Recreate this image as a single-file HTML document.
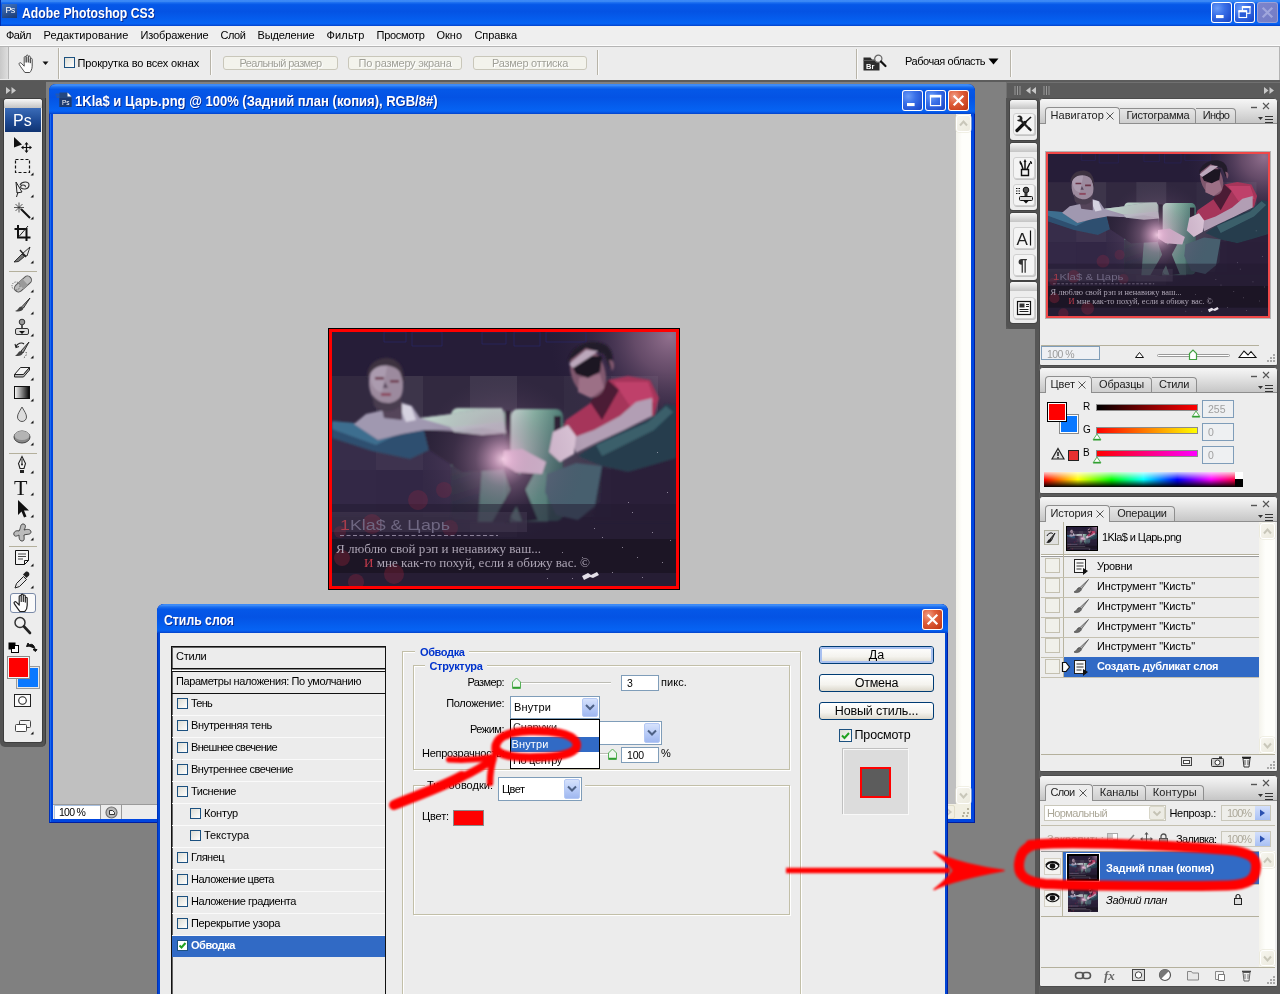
<!DOCTYPE html>
<html lang="ru"><head><meta charset="utf-8"><title>Adobe Photoshop CS3</title>
<style>
html,body{margin:0;padding:0;overflow:hidden}
body{width:1280px;height:994px;overflow:hidden;position:relative;background:#808080;font-family:"Liberation Sans",sans-serif;font-size:11px;}
body div,body svg,body span.t{position:absolute;}
#root{left:0;top:0;width:1280px;height:994px;overflow:hidden;}
span.t,svg text{opacity:0.999;}
span.t{white-space:pre;line-height:1;}
.abs{position:absolute}
</style></head>
<body>
<div id="root">
<!-- part_top -->
<div style="left:0px;top:0px;width:1280px;height:26px;background:linear-gradient(180deg,#3a88f8 0%,#3d8bf5 5%,#1c6ff0 10%,#0558e8 18%,#0453e4 45%,#0560f0 80%,#0663f4 90%,#0553e0 96%,#0340c8 100%);"></div>
<div style="left:0px;top:0px;width:1px;height:26px;background:#0030b0;"></div>
<div style="left:2px;top:4px;width:15px;height:14px;background:linear-gradient(160deg,#3f74c4,#1c3a70);"></div>
<span class="t" style="left:5.50px;top:6.38px;font-size:9px;color:#fff;letter-spacing:-0.752px;">Ps</span>
<span class="t" style="left:22.00px;top:5.73px;font-size:14.5px;color:#fff;font-weight:bold;text-shadow:1px 1px 0 #0a2a90;transform:scaleX(0.8435);transform-origin:0 0;">Adobe Photoshop CS3</span>
<div style="left:1211px;top:2px;width:21px;height:21px;border-radius:3px;background:radial-gradient(circle at 30% 30%,#6a9cf8 0%,#3a70e8 35%,#2050d0 75%,#1840b8 100%);box-shadow:inset 0 0 0 1px #fff;"></div><svg style="left:1211px;top:2px;" width="21" height="21" viewBox="0 0 21 21"><rect x="5.0" y="13.0" width="7.6" height="3.1" fill="#fff"/></svg>
<div style="left:1234px;top:2px;width:21px;height:21px;border-radius:3px;background:radial-gradient(circle at 30% 30%,#6a9cf8 0%,#3a70e8 35%,#2050d0 75%,#1840b8 100%);box-shadow:inset 0 0 0 1px #fff;"></div><svg style="left:1234px;top:2px;" width="21" height="21" viewBox="0 0 21 21"><rect x="8.4" y="4.6" width="7.6" height="6.7" fill="none" stroke="#fff" stroke-width="1.1"/><rect x="7.9" y="4.1" width="8.6" height="2" fill="#fff"/><rect x="5.0" y="8.8" width="7.6" height="6.7" fill="#2a5cd8" stroke="#fff" stroke-width="1.1"/><rect x="4.5" y="8.3" width="8.6" height="2" fill="#fff"/></svg>
<div style="left:1257px;top:2px;width:21px;height:21px;border-radius:3px;background:linear-gradient(135deg,#7c84cc,#747cc4);box-shadow:inset 0 0 0 1px rgba(255,255,255,0.25);"></div><svg style="left:1257px;top:2px;" width="21" height="21" viewBox="0 0 21 21"><path d="M5.7 5.7L15.3 15.3M15.3 5.7L5.7 15.3" stroke="#a0a6dc" stroke-width="2.2" stroke-linecap="butt"/></svg>
<div style="left:0px;top:26px;width:1280px;height:20px;background:#efefef;"></div>
<span class="t" style="left:6.00px;top:29.69px;font-size:11px;color:#000;letter-spacing:-0.511px;">Файл</span>
<span class="t" style="left:43.50px;top:29.69px;font-size:11px;color:#000;letter-spacing:0.086px;">Редактирование</span>
<span class="t" style="left:140.50px;top:29.69px;font-size:11px;color:#000;letter-spacing:-0.117px;">Изображение</span>
<span class="t" style="left:220.50px;top:29.69px;font-size:11px;color:#000;letter-spacing:-0.437px;">Слой</span>
<span class="t" style="left:257.50px;top:29.69px;font-size:11px;color:#000;letter-spacing:-0.143px;">Выделение</span>
<span class="t" style="left:326.50px;top:29.69px;font-size:11px;color:#000;letter-spacing:0.174px;">Фильтр</span>
<span class="t" style="left:376.50px;top:29.69px;font-size:11px;color:#000;letter-spacing:-0.279px;">Просмотр</span>
<span class="t" style="left:436.50px;top:29.69px;font-size:11px;color:#000;letter-spacing:-0.015px;">Окно</span>
<span class="t" style="left:474.50px;top:29.69px;font-size:11px;color:#000;letter-spacing:-0.093px;">Справка</span>
<div style="left:0px;top:45px;width:1280px;height:1px;background:#fcfcfc;"></div>
<div style="left:0px;top:46px;width:1280px;height:34px;background:#ececec;border-top:1px solid #b4b4b4;border-right:1px solid #b4b4b4;box-sizing:border-box;"></div>
<div style="left:0px;top:80px;width:1280px;height:2px;background:#5c5c5c;"></div>
<div style="left:0px;top:47px;width:8px;height:32px;background:linear-gradient(90deg,#c8c8c8,#dedede);"></div>
<div style="left:8px;top:47px;width:1px;height:32px;background:#b5b5b5;"></div>
<div style="left:58px;top:48px;width:1px;height:31px;background:#b8b4a8;"></div>
<div style="left:59px;top:48px;width:1px;height:31px;background:#fafafa;"></div>
<div style="left:210px;top:50px;width:1px;height:25px;background:#b8b4a8;"></div>
<div style="left:211px;top:50px;width:1px;height:25px;background:#fafafa;"></div>
<div style="left:597px;top:50px;width:1px;height:25px;background:#b8b4a8;"></div>
<div style="left:598px;top:50px;width:1px;height:25px;background:#fafafa;"></div>
<div style="left:856px;top:49px;width:1px;height:30px;background:#b8b4a8;"></div>
<div style="left:857px;top:49px;width:1px;height:30px;background:#fafafa;"></div>
<div style="left:1010px;top:50px;width:1px;height:27px;background:#b8b4a8;"></div>
<div style="left:1011px;top:50px;width:1px;height:27px;background:#fafafa;"></div>
<svg style="left:16px;top:53px;" width="22" height="22" viewBox="0 0 22 22"><path d="M8.2 10.5V4.6c0-1.5 2-1.5 2 0v4.8V3.2c0-1.5 2.1-1.5 2.1 0v6.2V4.1c0-1.5 2-1.5 2 0v6V6.3c0-1.4 1.9-1.4 1.9 0v6.9c0 3-1.6 5.6-2.4 6.3H8.9C7.6 17.6 5 14.4 3.3 11.6c-.9-1.5.9-2.6 2-1.4l2.9 3z" fill="#fdfdfd" stroke="#4a4a4a" stroke-width="1" stroke-linejoin="round"/></svg>
<svg style="left:42px;top:61px;" width="8" height="5" viewBox="0 0 8 5"><path d="M0.5 0.5h6L3.5 4z" fill="#111"/></svg>
<div style="left:64px;top:57px;width:11px;height:11px;background:linear-gradient(135deg,#dcdcd4,#fff);border:1px solid #1c5180;box-sizing:border-box;"></div>
<span class="t" style="left:77.50px;top:57.69px;font-size:11px;color:#000;letter-spacing:-0.147px;">Прокрутка во всех окнах</span>
<div style="left:223px;top:56px;width:115px;height:14px;background:#f3f3ec;border:1px solid #c9c7ba;border-radius:3px;box-sizing:border-box;"></div>
<span class="t" style="left:239.50px;top:57.69px;font-size:11px;color:#a0a098;letter-spacing:-0.625px;text-shadow:1px 1px 0 #fff;">Реальный размер</span>
<div style="left:348px;top:56px;width:114px;height:14px;background:#f3f3ec;border:1px solid #c9c7ba;border-radius:3px;box-sizing:border-box;"></div>
<span class="t" style="left:358.50px;top:57.69px;font-size:11px;color:#a0a098;letter-spacing:-0.254px;text-shadow:1px 1px 0 #fff;">По размеру экрана</span>
<div style="left:473px;top:56px;width:114px;height:14px;background:#f3f3ec;border:1px solid #c9c7ba;border-radius:3px;box-sizing:border-box;"></div>
<span class="t" style="left:492.00px;top:57.69px;font-size:11px;color:#a0a098;letter-spacing:-0.259px;text-shadow:1px 1px 0 #fff;">Размер оттиска</span>
<svg style="left:862px;top:52px;" width="28" height="24" viewBox="0 0 28 24"><path d="M1.500 5.500h7l1.500 2h7.500v11h-16z" fill="#2c2c2c"/><path d="M1.500 8.500h16" stroke="#666" stroke-width="0.800"/><circle cx="16.300" cy="6.800" r="3.600" fill="#ececec" stroke="#666" stroke-width="1.200"/><path d="M19 9.500l4.500 4.500" stroke="#111" stroke-width="2.200" stroke-linecap="round"/><text x="4" y="17" font-family="Liberation Sans,sans-serif" font-size="7.500" font-weight="bold" fill="#fff">Br</text></svg>
<span class="t" style="left:905.00px;top:55.69px;font-size:11px;color:#000;letter-spacing:-0.457px;">Рабочая область</span>
<svg style="left:988px;top:58px;" width="12" height="8" viewBox="0 0 12 8"><path d="M0.5 0.5h10L5.5 6.5z" fill="#000"/></svg>
<!-- part_tools -->
<div style="left:0px;top:81px;width:46px;height:666px;background:#535353;border-right:1px solid #3c3c3c;border-top:1px solid #6a6a6a;box-sizing:border-box;border-radius:0 0 5px 5px;"></div>
<div style="left:0px;top:81px;width:46px;height:17px;background:#585858;"></div>
<svg style="left:6px;top:87px;" width="11" height="7" viewBox="0 0 11 7"><path d="M0 0l4.500 3.500L0 7zM5.500 0l4.500 3.500L5.500 7z" fill="#c8c8c8"/></svg>
<div style="left:4px;top:99px;width:38px;height:643px;background:#ededed;border-radius:3px 3px 2px 2px;box-shadow:0 0 0 1px #3e3e3e;"></div>
<div style="left:4px;top:99px;width:38px;height:9px;background:linear-gradient(180deg,#f8f8f8,#c4c4c4);border-radius:3px 3px 0 0;"></div>
<div style="left:5px;top:108px;width:36px;height:24px;background:linear-gradient(180deg,#3b6cb8 0%,#1e4a94 55%,#103472 100%);"></div>
<span class="t" style="left:13.00px;top:113.46px;font-size:16px;color:#fff;letter-spacing:0.164px;">Ps</span>
<svg style="left:10.5px;top:134px;" width="22" height="22" viewBox="0 0 22 22"><path d="M3 3v10.5l8-3z" fill="#111"/><path d="M15.5 9.5v8M11.5 13.5h8" stroke="#111" stroke-width="1.2"/><path d="M15.5 8l-2 2.5h4zM15.5 19l-2-2.5h4zM10 13.5l2.5-2v4zM21 13.5l-2.5-2v4z" fill="#111"/></svg>
<svg style="left:11px;top:156px;" width="22" height="22" viewBox="0 0 22 22"><rect x="4.5" y="3.500" width="14" height="13" fill="none" stroke="#111" stroke-width="1.2" stroke-dasharray="3 2"/></svg>
<svg style="left:29.5px;top:172px;" width="4" height="4" viewBox="0 0 4 4"><path d="M3.500 0.500V3.500H0.500z" fill="#111"/></svg>
<svg style="left:10.5px;top:178px;" width="22" height="22" viewBox="0 0 22 22"><path d="M5 4l6 10-5 1z" fill="#eee" stroke="#222" stroke-width="1"/><path d="M9 7c2-4 9-4 9 0s-5 5-8 3c-1-1 0-3 2-3s3 1 2 2" fill="none" stroke="#333" stroke-width="1.1"/><path d="M7 14l-1.500 5" stroke="#222" stroke-width="1"/></svg>
<svg style="left:29.5px;top:194px;" width="4" height="4" viewBox="0 0 4 4"><path d="M3.500 0.500V3.500H0.500z" fill="#111"/></svg>
<svg style="left:10.5px;top:200px;" width="22" height="22" viewBox="0 0 22 22"><path d="M10 9l9 9" stroke="#111" stroke-width="2"/><path d="M8 2.500v10M3 7.500h10M4.500 4l7 7M11.500 4l-7 7" stroke="#333" stroke-width="0.8"/></svg>
<svg style="left:29.5px;top:216px;" width="4" height="4" viewBox="0 0 4 4"><path d="M3.500 0.500V3.500H0.500z" fill="#111"/></svg>
<svg style="left:11px;top:222px;" width="22" height="22" viewBox="0 0 22 22"><path d="M7 3v12.500h12.500M3.500 7h12v12" fill="none" stroke="#111" stroke-width="2"/><path d="M8 14.500L17 4" stroke="#222" stroke-width="1"/></svg>
<svg style="left:11px;top:244px;" width="22" height="22" viewBox="0 0 22 22"><path d="M3 18l8-8 2.5 2.5-6 5z" fill="#777" stroke="#222" stroke-width="0.9"/><path d="M11 10l8-7-3 9z" fill="#e4e4e4" stroke="#222" stroke-width="0.9"/><path d="M9 6l6 7" stroke="#222" stroke-width="1.4"/></svg>
<svg style="left:29.5px;top:260px;" width="4" height="4" viewBox="0 0 4 4"><path d="M3.500 0.500V3.500H0.500z" fill="#111"/></svg>
<svg style="left:10.5px;top:273px;" width="22" height="22" viewBox="0 0 22 22"><g transform="rotate(-42 12 11)"><rect x="2" y="7" width="20" height="8" rx="4" fill="#bdbdbd" stroke="#555" stroke-width="1"/><rect x="9" y="7" width="6" height="8" fill="#9a9a9a"/></g><circle cx="5" cy="13" r="4" fill="none" stroke="#555" stroke-width="0.9" stroke-dasharray="1.2 1.2"/></svg>
<svg style="left:29.5px;top:289px;" width="4" height="4" viewBox="0 0 4 4"><path d="M3.500 0.500V3.500H0.500z" fill="#111"/></svg>
<svg style="left:11px;top:295px;" width="22" height="22" viewBox="0 0 22 22"><path d="M19 3l-8 8.500 1.500 1.500z" fill="#999" stroke="#222" stroke-width="0.900"/><path d="M10.500 11.500c-3 0-3 3.500-6.500 4.500 3.500 1.500 7.500 0 8.500-2.500z" fill="#444"/></svg>
<svg style="left:29.5px;top:311px;" width="4" height="4" viewBox="0 0 4 4"><path d="M3.500 0.500V3.500H0.500z" fill="#111"/></svg>
<svg style="left:11px;top:317px;" width="22" height="22" viewBox="0 0 22 22"><circle cx="11" cy="5" r="2.8" fill="#999" stroke="#333"/><path d="M10 7.5h2v4h-2z" fill="#555"/><rect x="4.5" y="11.5" width="13" height="6" rx="1.5" fill="#ddd" stroke="#333"/><path d="M8 14h6l-3 3z" fill="#111"/></svg>
<svg style="left:29.5px;top:333px;" width="4" height="4" viewBox="0 0 4 4"><path d="M3.500 0.500V3.500H0.500z" fill="#111"/></svg>
<svg style="left:11px;top:339px;" width="22" height="22" viewBox="0 0 22 22"><path d="M18 3l-8 9 2 2z" fill="#999" stroke="#222" stroke-width="0.9"/><path d="M10 12c-3 0-3 3.5-6 4.500 3.5 1.5 7 0 8-2.5z" fill="#444"/><path d="M5 8c1-4 6-5 8-3M4 5l1 3.5 3-1" fill="none" stroke="#222" stroke-width="1.1"/><path d="M15 13c1 2 0 5-3 6" fill="none" stroke="#444" stroke-width="0.9" stroke-dasharray="1.3 1.3"/></svg>
<svg style="left:29.5px;top:355px;" width="4" height="4" viewBox="0 0 4 4"><path d="M3.500 0.500V3.500H0.500z" fill="#111"/></svg>
<svg style="left:11px;top:361px;" width="22" height="22" viewBox="0 0 22 22"><path d="M3.500 13.500l6-7h9l-6 7z" fill="#f4f4f4" stroke="#222" stroke-width="1"/><path d="M3.500 13.500v2.500h9l6-7V6.500l-6 7z" fill="#bbb" stroke="#222" stroke-width="1"/></svg>
<svg style="left:29.5px;top:377px;" width="4" height="4" viewBox="0 0 4 4"><path d="M3.500 0.500V3.500H0.500z" fill="#111"/></svg>
<svg style="left:11px;top:382px;" width="22" height="22" viewBox="0 0 22 22"><defs><linearGradient id="tg" x1="0" x2="1"><stop offset="0" stop-color="#fff"/><stop offset="1" stop-color="#000"/></linearGradient></defs><rect x="3.500" y="4.500" width="15" height="12" fill="url(#tg)" stroke="#111"/></svg>
<svg style="left:29.5px;top:398px;" width="4" height="4" viewBox="0 0 4 4"><path d="M3.500 0.500V3.500H0.500z" fill="#111"/></svg>
<svg style="left:11px;top:404px;" width="22" height="22" viewBox="0 0 22 22"><path d="M11 3c2.500 4.500 4.500 7 4.500 10a4.500 4.500 0 01-9 0c0-3 2-5.500 4.500-10z" fill="#ddd" stroke="#555" stroke-width="1"/></svg>
<svg style="left:29.5px;top:420px;" width="4" height="4" viewBox="0 0 4 4"><path d="M3.500 0.500V3.500H0.500z" fill="#111"/></svg>
<svg style="left:11px;top:426px;" width="22" height="22" viewBox="0 0 22 22"><ellipse cx="11" cy="11" rx="8" ry="6" fill="#888" stroke="#444"/><ellipse cx="11" cy="9.500" rx="7.500" ry="4.500" fill="#b4b4b4"/></svg>
<svg style="left:29.5px;top:442px;" width="4" height="4" viewBox="0 0 4 4"><path d="M3.500 0.500V3.500H0.500z" fill="#111"/></svg>
<svg style="left:11px;top:454px;" width="22" height="22" viewBox="0 0 22 22"><path d="M11 2.500l3.500 7-1.500 5h-4l-1.500-5z" fill="#f4f4f4" stroke="#222" stroke-width="1.1"/><path d="M11 5v5" stroke="#222"/><circle cx="11" cy="10.500" r="1" fill="#222"/><path d="M9 16h4v3H9z" fill="#222"/></svg>
<svg style="left:29.5px;top:470px;" width="4" height="4" viewBox="0 0 4 4"><path d="M3.500 0.500V3.500H0.500z" fill="#111"/></svg>
<svg style="left:11px;top:476px;" width="22" height="22" viewBox="0 0 22 22"><text x="3" y="19" font-family="Liberation Serif,serif" font-size="22" fill="#111">T</text></svg>
<svg style="left:29.5px;top:492px;" width="4" height="4" viewBox="0 0 4 4"><path d="M3.500 0.500V3.500H0.500z" fill="#111"/></svg>
<svg style="left:11px;top:498px;" width="22" height="22" viewBox="0 0 22 22"><path d="M7 2v15l3.500-3.500 2.500 6 2.500-1-2.500-6H18z" fill="#111"/></svg>
<svg style="left:29.5px;top:514px;" width="4" height="4" viewBox="0 0 4 4"><path d="M3.500 0.500V3.500H0.500z" fill="#111"/></svg>
<svg style="left:11px;top:521px;" width="22" height="22" viewBox="0 0 22 22"><path d="M3 14c-1-3 2-5 5-4 2-3 1-7 4-7s3 3 1 6c3-1 7-1 7 2s-5 2-7 3c0 3 1 6-2 6s-3-4-3-6c-2 1-4 2-5 0z" fill="#bbb" stroke="#444" stroke-width="1"/></svg>
<svg style="left:29.5px;top:537px;" width="4" height="4" viewBox="0 0 4 4"><path d="M3.500 0.500V3.500H0.500z" fill="#111"/></svg>
<svg style="left:11px;top:547px;" width="22" height="22" viewBox="0 0 22 22"><path d="M4.500 3.500h13v10l-4 4h-9z" fill="#f4f4f4" stroke="#111"/><path d="M7 7h8M7 9.500h8M7 12h5" stroke="#333" stroke-width="0.900"/><path d="M17.500 13.500h-4v4" fill="none" stroke="#111"/></svg>
<svg style="left:29.5px;top:563px;" width="4" height="4" viewBox="0 0 4 4"><path d="M3.500 0.500V3.500H0.500z" fill="#111"/></svg>
<svg style="left:11px;top:569px;" width="22" height="22" viewBox="0 0 22 22"><path d="M4 19l1.500-4.500 7-7 3 3-7 7z" fill="#e4e4e4" stroke="#222" stroke-width="1"/><path d="M12 5.500l2.500-2.500c2-1.500 5 1.500 3.500 3.500l-2.500 2.500z" fill="#222"/></svg>
<svg style="left:29.5px;top:585px;" width="4" height="4" viewBox="0 0 4 4"><path d="M3.500 0.500V3.500H0.500z" fill="#111"/></svg>
<div style="left:10px;top:593px;width:26px;height:20px;background:#fafafa;border:1px solid #7a8aa8;border-radius:3px;box-sizing:border-box;"></div>
<svg style="left:11px;top:592px;" width="22" height="22" viewBox="0 0 22 22"><path d="M8.200 10.500V4.600c0-1.500 2-1.500 2 0v4.800V3.200c0-1.500 2.100-1.500 2.100 0v6.200V4.100c0-1.500 2-1.500 2 0v6V6.300c0-1.400 1.900-1.400 1.900 0v6.900c0 3-1.600 5.600-2.400 6.300H8.900C7.600 17.600 5 14.400 3.300 11.600c-.9-1.500.9-2.600 2-1.400l2.900 3z" fill="#fff" stroke="#222" stroke-width="1.200" stroke-linejoin="round"/></svg>
<svg style="left:11px;top:614px;" width="22" height="22" viewBox="0 0 22 22"><circle cx="9" cy="8.500" r="5" fill="#f0f0f0" stroke="#333" stroke-width="1.5"/><path d="M13 12.500l6 6.500" stroke="#222" stroke-width="2.6" stroke-linecap="round"/></svg>
<div style="left:9px;top:271px;width:28px;height:1px;background:#b4b09c;"></div>
<div style="left:9px;top:453px;width:28px;height:1px;background:#b4b09c;"></div>
<div style="left:9px;top:546px;width:28px;height:1px;background:#b4b09c;"></div>
<svg style="left:8px;top:642px;" width="12" height="12" viewBox="0 0 12 12"><rect x="0.500" y="0.500" width="7" height="7" fill="#000"/><rect x="3.500" y="3.500" width="7" height="7" fill="#fff" stroke="#000"/><rect x="1" y="1" width="6" height="6" fill="#000"/></svg>
<svg style="left:26px;top:642px;" width="12" height="12" viewBox="0 0 12 12"><path d="M2 4c3-3 6-2 7 3M9.500 9.500l-2.500-2h4zM2 1l-1.500 3.500 3.500-.5z" fill="#111" stroke="#111" stroke-width="1"/></svg>
<div style="left:18px;top:668px;width:20px;height:19px;background:#0a78ff;box-shadow:0 0 0 1px #e8e8e8,0 0 0 2px #9a9a9a;"></div>
<div style="left:9px;top:658px;width:19px;height:19px;background:#ff0000;box-shadow:0 0 0 1px #f4f4f4,0 0 0 2px #8a8a8a;"></div>
<svg style="left:13px;top:693px;" width="20" height="16" viewBox="0 0 20 16"><rect x="1.500" y="1.500" width="16" height="12" fill="#fafafa" stroke="#222"/><circle cx="9.500" cy="7.500" r="3.800" fill="#fff" stroke="#222" stroke-width="1.100"/></svg>
<svg style="left:13px;top:718px;" width="20" height="16" viewBox="0 0 20 16"><rect x="6.500" y="2.500" width="11" height="7" rx="1" fill="#f4f4f4" stroke="#444"/><rect x="2.500" y="6.500" width="11" height="7" rx="1" fill="#fdfdfd" stroke="#444"/></svg>
<svg style="left:29.5px;top:731px;" width="4" height="4" viewBox="0 0 4 4"><path d="M3.500 0.500V3.500H0.500z" fill="#111"/></svg>
<!-- part_doc -->
<div style="left:49px;top:84px;width:926px;height:739px;background:#0046e0;border-radius:7px 7px 0 0;box-shadow:inset 1px 0 0 #0030b8,inset -1px -1px 0 #001ea0,inset 2px 0 0 #1a6af0;"></div>
<div style="left:49px;top:84px;width:926px;height:30px;background:linear-gradient(180deg,#3a88f8 0%,#3d8bf5 5%,#1c6ff0 10%,#0558e8 18%,#0453e4 45%,#0560f0 80%,#0663f4 90%,#0553e0 96%,#0340c8 100%);border-radius:7px 7px 0 0;"></div>
<div style="left:53px;top:114px;width:903px;height:690px;background:#c0c0c0;"></div>
<svg style="left:55px;top:90px;" width="18" height="18" viewBox="0 0 18 18"><path d="M0.5 3.5h9v2h-9zM1.5 6h8v2h-8z" fill="#2458b0"/><path d="M4.5 2.5h8l4 4v10.500h-12z" fill="#244880"/><path d="M4.5 8h12v9h-12z" fill="#1c3a70"/><path d="M12.5 2.500v4h4z" fill="#fff"/><text x="7" y="14.500" font-family="Liberation Sans,sans-serif" font-size="6.500" fill="#fff">Ps</text></svg>
<span class="t" style="left:75.00px;top:93.73px;font-size:14.5px;color:#fff;font-weight:bold;text-shadow:1px 1px 0 #0a2a90;transform:scaleX(0.8970);transform-origin:0 0;">1Kla$ и Царь.png @ 100% (Задний план (копия), RGB/8#)</span>
<div style="left:902px;top:90px;width:21px;height:21px;border-radius:3px;background:radial-gradient(circle at 30% 30%,#6a9cf8 0%,#3a70e8 35%,#2050d0 75%,#1840b8 100%);box-shadow:inset 0 0 0 1px #fff;"></div><svg style="left:902px;top:90px;" width="21" height="21" viewBox="0 0 21 21"><rect x="5.0" y="13.0" width="7.6" height="3.1" fill="#fff"/></svg>
<div style="left:925px;top:90px;width:21px;height:21px;border-radius:3px;background:radial-gradient(circle at 30% 30%,#6a9cf8 0%,#3a70e8 35%,#2050d0 75%,#1840b8 100%);box-shadow:inset 0 0 0 1px #fff;"></div><svg style="left:925px;top:90px;" width="21" height="21" viewBox="0 0 21 21"><rect x="5.5" y="5.5" width="10.1" height="10.1" fill="none" stroke="#fff" stroke-width="1.2"/><rect x="4.9" y="4.9" width="11.3" height="2.6" fill="#fff"/></svg>
<div style="left:948px;top:90px;width:21px;height:21px;border-radius:3px;background:radial-gradient(circle at 30% 30%,#f0a088 0%,#e0603c 35%,#c8401c 75%,#b03010 100%);box-shadow:inset 0 0 0 1px #fff;"></div><svg style="left:948px;top:90px;" width="21" height="21" viewBox="0 0 21 21"><path d="M5.7 5.7L15.3 15.3M15.3 5.7L5.7 15.3" stroke="#fff" stroke-width="2.2" stroke-linecap="butt"/></svg>
<div style="left:956px;top:114px;width:15px;height:690px;background:linear-gradient(90deg,#f4f3ec,#fefefb 40%,#fefefb);"></div>
<div style="left:956px;top:115px;width:15px;height:17px;background:linear-gradient(135deg,#f6f5ee,#eceade);border:1px solid #fff;border-radius:3px;box-sizing:border-box;box-shadow:0 0 0 0.5px #e4e1d0;"></div><svg style="left:956px;top:115px;" width="15" height="17" viewBox="0 0 15 17"><path d="M4 10.500l3.500-4 3.500 4" fill="none" stroke="#c9c7ba" stroke-width="2"/></svg>
<div style="left:956px;top:787px;width:15px;height:17px;background:linear-gradient(135deg,#f6f5ee,#eceade);border:1px solid #fff;border-radius:3px;box-sizing:border-box;box-shadow:0 0 0 0.5px #e4e1d0;"></div><svg style="left:956px;top:787px;" width="15" height="17" viewBox="0 0 15 17"><path d="M4 6.500l3.500 4 3.500-4" fill="none" stroke="#c9c7ba" stroke-width="2"/></svg>
<div style="left:53px;top:804px;width:903px;height:15px;background:#ececec;border-top:1px solid #9a9a9a;box-sizing:border-box;"></div>
<div style="left:54px;top:805px;width:46px;height:14px;background:#fff;border-right:1px solid #9a9a9a;box-shadow:inset 1px 1px 0 #a8c0e0;"></div>
<span class="t" style="left:59.00px;top:807.11px;font-size:10.5px;color:#000;letter-spacing:-0.754px;">100 %</span>
<div style="left:121px;top:805px;width:1px;height:14px;background:#9a9a9a;"></div>
<svg style="left:105px;top:806px;" width="13" height="13" viewBox="0 0 13 13"><circle cx="6.500" cy="6.500" r="5.500" fill="#b8b8b8" stroke="#707070" stroke-width="1.200"/><path d="M4.500 4.500h3l2 2v2h-5z" fill="#f4f4f4" stroke="#222" stroke-width="0.900"/></svg>
<div style="left:940px;top:804px;width:31px;height:15px;background:#f1efe2;"></div>
<div style="left:941px;top:805px;width:14px;height:14px;background:#f1efe2;border:1px solid #e0ddc8;border-radius:2px;box-sizing:border-box;"></div>
<svg style="left:941px;top:805px;" width="14" height="14" viewBox="0 0 14 14"><path d="M5.500 3.500l4 3.500-4 3.500" fill="none" stroke="#c9c7ba" stroke-width="2"/></svg>
<svg style="left:958px;top:806px;" width="12" height="12" viewBox="0 0 12 12"><path d="M10 2v2M10 6v2M6 6v2M10 10v0M8 10h2M4 10h2" stroke="#b8b4a0" stroke-width="2"/></svg>
<div style="left:328px;top:328px;width:352px;height:262px;background:#000;"></div>
<div style="left:329px;top:329px;width:350px;height:260px;background:#ff0000;"></div>
<svg style="left:332px;top:332px;" width="344" height="254" viewBox="0 0 344 254" preserveAspectRatio="none"><defs>
<radialGradient id="pag1" gradientUnits="userSpaceOnUse" cx="171" cy="127" r="82"><stop offset="0" stop-color="#f6cfe6" stop-opacity="0.95"/><stop offset="0.12" stop-color="#dcaacb" stop-opacity="0.78"/><stop offset="0.34" stop-color="#b084a6" stop-opacity="0.42"/><stop offset="0.62" stop-color="#8a6488" stop-opacity="0.17"/><stop offset="1" stop-color="#604868" stop-opacity="0"/></radialGradient>
<radialGradient id="pag2" gradientUnits="userSpaceOnUse" cx="338" cy="4" r="120"><stop offset="0" stop-color="#92708e" stop-opacity="1"/><stop offset="0.3" stop-color="#745674" stop-opacity="0.8"/><stop offset="0.65" stop-color="#4a3858" stop-opacity="0.35"/><stop offset="1" stop-color="#3a2c48" stop-opacity="0"/></radialGradient>
<linearGradient id="pas1" x1="0" y1="0" x2="0.15" y2="1"><stop offset="0" stop-color="#c4dcd0"/><stop offset="0.3" stop-color="#8ab8a4"/><stop offset="0.6" stop-color="#4c7c74"/><stop offset="1" stop-color="#2e4a50"/></linearGradient>
<linearGradient id="pas2" x1="0" y1="0" x2="1" y2="0.6"><stop offset="0" stop-color="#cfe6dc"/><stop offset="0.35" stop-color="#86b8a4"/><stop offset="0.75" stop-color="#4a7a72"/><stop offset="1" stop-color="#385c5c"/></linearGradient>
<filter id="pab" x="-5%" y="-5%" width="110%" height="110%"><feGaussianBlur stdDeviation="1.1"/></filter>
</defs><rect width="344" height="254" fill="#2a2139"/><rect width="344" height="44" fill="#261d38"/><rect x="0" y="44" width="44" height="47" fill="#fff" fill-opacity="0.04"/><rect x="44" y="44" width="47" height="47" fill="#fff" fill-opacity="0.09"/><rect x="91" y="44" width="47" height="47" fill="#fff" fill-opacity="0.04"/><rect x="138" y="44" width="47" height="47" fill="#fff" fill-opacity="0.1"/><rect x="185" y="44" width="47" height="47" fill="#fff" fill-opacity="0.03"/><rect x="232" y="44" width="47" height="47" fill="#fff" fill-opacity="0.05"/><rect x="279" y="44" width="47" height="47" fill="#fff" fill-opacity="0.12"/><rect x="0" y="91" width="44" height="47" fill="#fff" fill-opacity="0.08"/><rect x="44" y="91" width="47" height="47" fill="#fff" fill-opacity="0.14"/><rect x="91" y="91" width="47" height="47" fill="#fff" fill-opacity="0.07"/><rect x="138" y="91" width="47" height="47" fill="#fff" fill-opacity="0.12"/><rect x="185" y="91" width="47" height="47" fill="#fff" fill-opacity="0.1"/><rect x="232" y="91" width="47" height="47" fill="#fff" fill-opacity="0.12"/><rect x="279" y="91" width="65" height="47" fill="#fff" fill-opacity="0.02"/><rect x="0" y="138" width="44" height="47" fill="#fff" fill-opacity="0.03"/><rect x="44" y="138" width="47" height="47" fill="#fff" fill-opacity="0.02"/><rect x="91" y="138" width="47" height="47" fill="#fff" fill-opacity="0.04"/><rect x="138" y="138" width="47" height="47" fill="#fff" fill-opacity="0.12"/><rect x="185" y="138" width="47" height="47" fill="#fff" fill-opacity="0.1"/><rect x="232" y="138" width="47" height="47" fill="#fff" fill-opacity="0.03"/><rect x="138" y="185" width="47" height="20" fill="#fff" fill-opacity="0.03"/><rect width="344" height="254" fill="url(#pag2)"/><path d="M52 0h22v10H52zM80 0h30v14H80zM150 0h24v12h-24zM182 0h26v14h-26zM214 0h40v10h-40z" fill="none" stroke="#2a2870" stroke-width="1" opacity="0.6"/><g filter="url(#pab)"><rect x="119" y="76" width="54" height="112" rx="7" fill="url(#pas1)"/><rect x="179" y="77" width="52" height="112" rx="7" fill="url(#pas2)"/><path d="M173 79h6v112h-6z" fill="#1c1626"/><path d="M119 134L172 134L172 190L119 190Z" fill="#2a2038" opacity="0.82"/><path d="M150 136L172 132L182 150L168 190L146 190Z" fill="#5c9484" opacity="0.7"/><path d="M182 136L214 140L216 190L178 190Z" fill="#5e9686" opacity="0.55"/><path d="M170 134L184 134L206 188L190 190Z" fill="#241c30"/><path d="M202 142L190 138L160 190L176 190Z" fill="#241c30"/><path d="M0 89L22 91L46 108L70 102L92 98L97 118L78 127L40 119L0 106Z" fill="#2f4f70"/><path d="M0 89L22 91L46 108L62 104L44 113L0 97Z" fill="#44789a" opacity="0.75"/><path d="M0 106L40 119L78 127L97 118L119 130L119 182L0 182Z" fill="#352c4a" opacity="0.55"/><path d="M22 92L34 82L52 78L58 72L68 70L80 74L88 86L120 82L150 77L170 76L172 90L150 96L122 99L92 98L70 102L46 108Z" fill="#a098b0"/><path d="M88 86L120 82L150 77L170 76L172 90L150 95L118 95Z" fill="#bcd0c8"/><path d="M66 71L79 74L84 88L74 90Z" fill="#d6d2e0"/><path d="M48 68L70 70L70 88L52 86Z" fill="#54445a"/><ellipse cx="54" cy="52" rx="17" ry="24" fill="#9c8a9e" transform="rotate(-6 54 52)"/><path d="M38 44C40 34 48 30 56 30L50 60C44 60 39 54 38 44Z" fill="#b0a0b4" opacity="0.75"/><path d="M40 62C46 73 64 75 70 62L68 74C62 81 48 81 42 74Z" fill="#4a3c50"/><path d="M35 46C35 30 47 25 57 26C69 28 73 38 72 52L68 40C62 32 47 31 40 39Z" fill="#3c3040"/><path d="M43 45h9v2.500H43zM58 48h9v2.500h-9z" fill="#6c3448"/><path d="M49 61h10v3H49z" fill="#8c4860"/><path d="M53 50l3 6h-5z" fill="#5a4a5e"/><path d="M92 98L122 99L150 96L172 100L176 122L170 138L130 140L97 118Z" fill="#2b2139"/><path d="M118 95L172 90L174 101L150 103L122 100Z" fill="#c4ccd0" opacity="0.9"/><path d="M172 119L190 117L214 130L210 142L184 140L172 132Z" fill="#dcc4d8"/><path d="M246 124L266 111L292 98L316 88L334 72L344 74L344 126L322 133L296 140L270 134Z" fill="#263e4e"/><path d="M264 113L316 90L334 74L341 80L322 98L270 124Z" fill="#4a747e" opacity="0.6"/><path d="M215 142L244 131L270 134L268 170L246 188L224 183L213 160Z" fill="#465f6e"/><path d="M270 134L296 140L344 126L344 190L260 190Z" fill="#2a2139" opacity="0.85"/><path d="M228 104L234 88L260 70L276 48L296 44L318 48L327 66L322 84L300 80L276 94L250 106Z" fill="#a6345a"/><path d="M282 50L316 50L323 70L298 74Z" fill="#c2426c" opacity="0.9"/><path d="M258 70L276 48L287 58L270 88Z" fill="#4c1c34"/><ellipse cx="256" cy="40" rx="17" ry="26" fill="#80586e" transform="rotate(-18 256 40)"/><path d="M247 46L268 42L272 56L259 66L246 60Z" fill="#9c7086"/><path d="M236 30C238 13 260 5 274 13C282 19 282 29 278 36L272 22L254 16Z" fill="#241c2c"/><path d="M240 34L258 24L270 24L268 40L256 46L244 42Z" fill="#1a1322"/><path d="M237 32L254 18L266 19L258 25L241 36Z" fill="#bca8bc"/><path d="M277 28c5-1 7 6 3 11z" fill="#80586e"/><path d="M240 106L262 98L288 84L304 70L320 66L320 84L292 98L266 110L244 121Z" fill="#b29eb4"/><path d="M222 84h7v20h-7z" fill="#261d2e"/><path d="M221 100L236 93L244 104L242 122L228 130L217 120Z" fill="#dcc6d8"/></g><rect width="344" height="254" fill="url(#pag1)"/><rect y="172" width="344" height="82" fill="#221a30" opacity="0.5"/><rect x="0" y="180" width="195" height="20" fill="#5a5068" opacity="0.3"/><rect x="0" y="207" width="344" height="34" fill="#15101c" opacity="0.6"/><circle cx="86" cy="168" r="10" fill="#c02840" opacity="0.2"/><circle cx="112" cy="158" r="8" fill="#c02840" opacity="0.16"/><circle cx="40" cy="192" r="10" fill="#c02840" opacity="0.2"/><circle cx="10" cy="226" r="8" fill="#c02840" opacity="0.28"/><circle cx="62" cy="242" r="10" fill="#c02840" opacity="0.25"/><circle cx="24" cy="250" r="8" fill="#c02840" opacity="0.25"/><circle cx="118" cy="196" r="8" fill="#c02840" opacity="0.15"/><circle cx="8" cy="200" r="6" fill="#c02840" opacity="0.2"/><path d="M8 203.500h158" stroke="#8a8098" stroke-width="1" stroke-dasharray="4 2.500"/><path d="M250 244l6-3 3 2 6-3 2 3-6 3-3-1-6 3z" fill="#e4dfe8"/><g fill="#cfc8d8" opacity="0.6"><rect x="300" y="180" width="1" height="1"/><rect x="320" y="200" width="1" height="1"/><rect x="290" y="215" width="1" height="1"/><rect x="330" y="230" width="1" height="1"/><rect x="310" y="245" width="1" height="1"/><rect x="270" y="205" width="1" height="1"/><rect x="250" y="225" width="1" height="1"/><rect x="335" y="160" width="1" height="1"/><rect x="280" y="240" width="1" height="1"/><rect x="325" y="120" width="1" height="1"/><rect x="240" y="246" width="1" height="1"/><rect x="305" y="225" width="1" height="1"/><rect x="262" y="196" width="1" height="1"/><rect x="338" y="208" width="1" height="1"/><rect x="296" y="170" width="1" height="1"/><rect x="230" y="220" width="1" height="1"/><rect x="215" y="246" width="1" height="1"/></g><text x="8" y="197.5" font-family="Liberation Sans,sans-serif" font-size="14" fill="#6f6782" textLength="110" lengthAdjust="spacingAndGlyphs"><tspan fill="#a83c4c">1</tspan>Kla$ &amp; Царь</text><text x="4" y="220.5" font-family="Liberation Serif,serif" font-size="13.500" fill="#aca4b4" textLength="205" lengthAdjust="spacingAndGlyphs">Я люблю свой рэп и ненавижу ваш...</text><text x="32" y="234.5" font-family="Liberation Serif,serif" font-size="13.500" fill="#aca4b4" textLength="226" lengthAdjust="spacingAndGlyphs"><tspan fill="#c43c4c">И</tspan> мне как-то похуй, если я обижу вас. ©</text></svg>
<!-- part_dock -->
<div style="left:1006px;top:82px;width:274px;height:912px;background:#5a5a5a;"></div>
<div style="left:1006px;top:82px;width:274px;height:16px;background:#5b5b5b;border-top:1px solid #707070;border-left:1px solid #707070;box-sizing:border-box;"></div>
<div style="left:1006px;top:98px;width:1px;height:226px;background:#6a6a6a;"></div>
<div style="left:1037px;top:98px;width:3px;height:896px;background:#5e5e5e;"></div>
<svg style="left:1014px;top:86px;" width="8" height="9" viewBox="0 0 8 9"><path d="M1 0v9M3.500 0v9M6 0v9" stroke="#9a9a9a" stroke-width="1"/></svg>
<svg style="left:1026px;top:87px;" width="11" height="7" viewBox="0 0 11 7"><path d="M4.500 0L0 3.500 4.500 7zM10 0L5.500 3.500 10 7z" fill="#c8c8c8"/></svg>
<svg style="left:1043px;top:86px;" width="8" height="9" viewBox="0 0 8 9"><path d="M1 0v9M3.500 0v9M6 0v9" stroke="#9a9a9a" stroke-width="1"/></svg>
<svg style="left:1264px;top:87px;" width="11" height="7" viewBox="0 0 11 7"><path d="M0 0l4.500 3.500L0 7zM5.500 0l4.500 3.500L5.500 7z" fill="#c8c8c8"/></svg>
<div style="left:1006px;top:98px;width:33px;height:231px;background:#535353;border-radius:0 0 0 5px;"></div>
<div style="left:1006px;top:329px;width:29px;height:665px;background:#808080;"></div>
<div style="left:1005px;top:325px;width:1px;height:669px;background:#808080;"></div>
<div style="left:1035px;top:329px;width:4px;height:665px;background:#565656;"></div>
<div style="left:1010px;top:100px;width:27px;height:40px;background:#ededed;border-radius:3px;box-shadow:0 0 0 1px #444;"></div>
<div style="left:1010px;top:100px;width:27px;height:9px;background:linear-gradient(180deg,#f8f8f8,#c4c4c4);border-radius:3px 3px 0 0;"></div>
<div style="left:1010px;top:143px;width:27px;height:67px;background:#ededed;border-radius:3px;box-shadow:0 0 0 1px #444;"></div>
<div style="left:1010px;top:143px;width:27px;height:9px;background:linear-gradient(180deg,#f8f8f8,#c4c4c4);border-radius:3px 3px 0 0;"></div>
<div style="left:1010px;top:213px;width:27px;height:67px;background:#ededed;border-radius:3px;box-shadow:0 0 0 1px #444;"></div>
<div style="left:1010px;top:213px;width:27px;height:9px;background:linear-gradient(180deg,#f8f8f8,#c4c4c4);border-radius:3px 3px 0 0;"></div>
<div style="left:1010px;top:282px;width:27px;height:41px;background:#ededed;border-radius:3px;box-shadow:0 0 0 1px #444;"></div>
<div style="left:1010px;top:282px;width:27px;height:9px;background:linear-gradient(180deg,#f8f8f8,#c4c4c4);border-radius:3px 3px 0 0;"></div>
<div style="left:1013px;top:113px;width:22px;height:22px;background:#f4f4f4;border:1px solid #d0d0d0;border-radius:3px;box-sizing:border-box;box-shadow:1px 1px 0 #c4c4c4;"></div>
<svg style="left:1013px;top:113px;" width="22" height="22" viewBox="0 0 22 22"><path d="M4 17.500l8-8" stroke="#111" stroke-width="3.200" stroke-linecap="round"/><path d="M12 9.500l6-5.500" stroke="#111" stroke-width="1.600"/><path d="M17 16.500L7 6.500" stroke="#222" stroke-width="2.200"/><path d="M4 3.500c2-1.500 4-1 5 .5s.5 3-1 4-3 .5-4-1l2.500-.5.500-2z" fill="#222"/><path d="M16 14l3 3-1.500 1.500-3-3z" fill="#111"/></svg>
<div style="left:1013px;top:157px;width:22px;height:22px;background:#f4f4f4;border:1px solid #d0d0d0;border-radius:3px;box-sizing:border-box;box-shadow:1px 1px 0 #c4c4c4;"></div>
<svg style="left:1013px;top:157px;" width="22" height="22" viewBox="0 0 22 22"><path d="M8.500 12.500h7v6h-7z" fill="#f4f4f4" stroke="#111" stroke-width="1.400"/><path d="M10 12l-2-6M12 12V4M14 12l3-6" stroke="#111" stroke-width="1.500"/><path d="M7 3.500c1.500 1 2 3 1 4.500-1.500-1-2-3-1-4.500zM12 2l1.500 3h-3zM17 4c1.500 0 2.500 1.500 2 3-1.500 0-2.500-1.500-2-3z" fill="#111"/></svg>
<div style="left:1013px;top:184px;width:22px;height:22px;background:#f4f4f4;border:1px solid #d0d0d0;border-radius:3px;box-sizing:border-box;box-shadow:1px 1px 0 #c4c4c4;"></div>
<svg style="left:1013px;top:184px;" width="22" height="22" viewBox="0 0 22 22"><circle cx="13" cy="6" r="2.800" fill="#555" stroke="#111"/><path d="M11.500 8.500h3v4h-3z" fill="#333"/><rect x="6.500" y="12.500" width="13" height="4" rx="1" fill="#ddd" stroke="#111"/><path d="M10 16.500h6l-3 3z" fill="#111"/><path d="M3 4.500h5M3 7h4M3 9.500h5" stroke="#111" stroke-width="1.200" stroke-dasharray="1.500 1"/></svg>
<div style="left:1013px;top:227px;width:22px;height:22px;background:#f4f4f4;border:1px solid #d0d0d0;border-radius:3px;box-sizing:border-box;box-shadow:1px 1px 0 #c4c4c4;"></div>
<svg style="left:1013px;top:227px;" width="22" height="22" viewBox="0 0 22 22"><text x="3.500" y="17.500" font-family="Liberation Sans,sans-serif" font-size="17" fill="#222">A</text><path d="M17.500 3.500v15" stroke="#111" stroke-width="1.200"/></svg>
<div style="left:1013px;top:254px;width:22px;height:22px;background:#f4f4f4;border:1px solid #d0d0d0;border-radius:3px;box-sizing:border-box;box-shadow:1px 1px 0 #c4c4c4;"></div>
<svg style="left:1013px;top:254px;" width="22" height="22" viewBox="0 0 22 22"><text x="5" y="17" font-family="Liberation Sans,sans-serif" font-size="17" font-weight="bold" fill="#333">¶</text></svg>
<div style="left:1013px;top:296.5px;width:22px;height:22px;background:#f4f4f4;border:1px solid #d0d0d0;border-radius:3px;box-sizing:border-box;box-shadow:1px 1px 0 #c4c4c4;"></div>
<svg style="left:1013px;top:296.5px;" width="22" height="22" viewBox="0 0 22 22"><rect x="4.500" y="4.500" width="13" height="13" fill="#fafafa" stroke="#111" stroke-width="1.200"/><rect x="6.500" y="6.500" width="5" height="4" fill="#333"/><path d="M13 7.500h3M13 9.500h3M6.500 12.500h9M6.500 14.500h9" stroke="#222" stroke-width="1"/></svg>
<div style="left:1039px;top:98px;width:239px;height:268px;background:#ededed;border:1px solid #4c4c4c;border-radius:4px 4px 2px 2px;box-sizing:border-box;"></div>
<div style="left:1040px;top:99px;width:237px;height:24px;background:linear-gradient(180deg,#f6f6f6 0%,#e4e4e4 40%,#c6c6c6 100%);border-radius:3px 3px 0 0;"></div>
<div style="left:1040px;top:123px;width:237px;height:1px;background:#8e8e8e;"></div>
<div style="left:1044.5px;top:107px;width:75.5px;height:17px;background:#ededed;border:1px solid #8e8e8e;border-bottom:none;border-radius:4px 4px 0 0;box-sizing:border-box;"></div>
<span class="t" style="left:1050.50px;top:110.19px;font-size:11px;color:#222;letter-spacing:0.073px;">Навигатор</span>
<svg style="left:1106px;top:111.5px;" width="8" height="8" viewBox="0 0 8 8"><path d="M0.5 0.5l7 7M7.5 0.5l-7 7" stroke="#555" stroke-width="1"/></svg>
<div style="left:1120px;top:108px;width:76px;height:15px;background:linear-gradient(180deg,#e6e6e6,#cfcfcf);border:1px solid #8e8e8e;border-bottom:none;border-left:none;border-radius:0 4px 0 0;box-sizing:border-box;"></div>
<span class="t" style="left:1126.50px;top:110.19px;font-size:11px;color:#222;letter-spacing:-0.228px;">Гистограмма</span>
<div style="left:1196px;top:108px;width:40px;height:15px;background:linear-gradient(180deg,#e6e6e6,#cfcfcf);border:1px solid #8e8e8e;border-bottom:none;border-left:none;border-radius:0 4px 0 0;box-sizing:border-box;"></div>
<span class="t" style="left:1202.75px;top:110.19px;font-size:11px;color:#222;letter-spacing:-0.662px;">Инфо</span>
<svg style="left:1250px;top:102px;" width="24" height="8" viewBox="0 0 24 8"><path d="M1 5.500h6" stroke="#555" stroke-width="1.400"/><path d="M13 1l6 6M19 1l-6 6" stroke="#555" stroke-width="1.100"/></svg>
<svg style="left:1257px;top:115px;" width="18" height="8" viewBox="0 0 18 8"><path d="M1 2h5L3.500 5z" fill="#333"/><path d="M8 1.500h8M8 4.500h8M8 7.500h8" stroke="#333" stroke-width="1"/></svg>
<div style="left:1046px;top:152px;width:224px;height:166px;background:#f04848;box-shadow:0 0 0 1px #b4b4b4;"></div>
<svg style="left:1048px;top:154px;" width="220" height="162" viewBox="0 0 344 254" preserveAspectRatio="none"><defs>
<radialGradient id="png1" gradientUnits="userSpaceOnUse" cx="171" cy="127" r="82"><stop offset="0" stop-color="#f6cfe6" stop-opacity="0.95"/><stop offset="0.12" stop-color="#dcaacb" stop-opacity="0.78"/><stop offset="0.34" stop-color="#b084a6" stop-opacity="0.42"/><stop offset="0.62" stop-color="#8a6488" stop-opacity="0.17"/><stop offset="1" stop-color="#604868" stop-opacity="0"/></radialGradient>
<radialGradient id="png2" gradientUnits="userSpaceOnUse" cx="338" cy="4" r="120"><stop offset="0" stop-color="#92708e" stop-opacity="1"/><stop offset="0.3" stop-color="#745674" stop-opacity="0.8"/><stop offset="0.65" stop-color="#4a3858" stop-opacity="0.35"/><stop offset="1" stop-color="#3a2c48" stop-opacity="0"/></radialGradient>
<linearGradient id="pns1" x1="0" y1="0" x2="0.15" y2="1"><stop offset="0" stop-color="#c4dcd0"/><stop offset="0.3" stop-color="#8ab8a4"/><stop offset="0.6" stop-color="#4c7c74"/><stop offset="1" stop-color="#2e4a50"/></linearGradient>
<linearGradient id="pns2" x1="0" y1="0" x2="1" y2="0.6"><stop offset="0" stop-color="#cfe6dc"/><stop offset="0.35" stop-color="#86b8a4"/><stop offset="0.75" stop-color="#4a7a72"/><stop offset="1" stop-color="#385c5c"/></linearGradient>
<filter id="pnb" x="-5%" y="-5%" width="110%" height="110%"><feGaussianBlur stdDeviation="1.1"/></filter>
</defs><rect width="344" height="254" fill="#2a2139"/><rect width="344" height="44" fill="#261d38"/><rect x="0" y="44" width="44" height="47" fill="#fff" fill-opacity="0.04"/><rect x="44" y="44" width="47" height="47" fill="#fff" fill-opacity="0.09"/><rect x="91" y="44" width="47" height="47" fill="#fff" fill-opacity="0.04"/><rect x="138" y="44" width="47" height="47" fill="#fff" fill-opacity="0.1"/><rect x="185" y="44" width="47" height="47" fill="#fff" fill-opacity="0.03"/><rect x="232" y="44" width="47" height="47" fill="#fff" fill-opacity="0.05"/><rect x="279" y="44" width="47" height="47" fill="#fff" fill-opacity="0.12"/><rect x="0" y="91" width="44" height="47" fill="#fff" fill-opacity="0.08"/><rect x="44" y="91" width="47" height="47" fill="#fff" fill-opacity="0.14"/><rect x="91" y="91" width="47" height="47" fill="#fff" fill-opacity="0.07"/><rect x="138" y="91" width="47" height="47" fill="#fff" fill-opacity="0.12"/><rect x="185" y="91" width="47" height="47" fill="#fff" fill-opacity="0.1"/><rect x="232" y="91" width="47" height="47" fill="#fff" fill-opacity="0.12"/><rect x="279" y="91" width="65" height="47" fill="#fff" fill-opacity="0.02"/><rect x="0" y="138" width="44" height="47" fill="#fff" fill-opacity="0.03"/><rect x="44" y="138" width="47" height="47" fill="#fff" fill-opacity="0.02"/><rect x="91" y="138" width="47" height="47" fill="#fff" fill-opacity="0.04"/><rect x="138" y="138" width="47" height="47" fill="#fff" fill-opacity="0.12"/><rect x="185" y="138" width="47" height="47" fill="#fff" fill-opacity="0.1"/><rect x="232" y="138" width="47" height="47" fill="#fff" fill-opacity="0.03"/><rect x="138" y="185" width="47" height="20" fill="#fff" fill-opacity="0.03"/><rect width="344" height="254" fill="url(#png2)"/><path d="M52 0h22v10H52zM80 0h30v14H80zM150 0h24v12h-24zM182 0h26v14h-26zM214 0h40v10h-40z" fill="none" stroke="#2a2870" stroke-width="1" opacity="0.6"/><g filter="url(#pnb)"><rect x="119" y="76" width="54" height="112" rx="7" fill="url(#pns1)"/><rect x="179" y="77" width="52" height="112" rx="7" fill="url(#pns2)"/><path d="M173 79h6v112h-6z" fill="#1c1626"/><path d="M119 134L172 134L172 190L119 190Z" fill="#2a2038" opacity="0.82"/><path d="M150 136L172 132L182 150L168 190L146 190Z" fill="#5c9484" opacity="0.7"/><path d="M182 136L214 140L216 190L178 190Z" fill="#5e9686" opacity="0.55"/><path d="M170 134L184 134L206 188L190 190Z" fill="#241c30"/><path d="M202 142L190 138L160 190L176 190Z" fill="#241c30"/><path d="M0 89L22 91L46 108L70 102L92 98L97 118L78 127L40 119L0 106Z" fill="#2f4f70"/><path d="M0 89L22 91L46 108L62 104L44 113L0 97Z" fill="#44789a" opacity="0.75"/><path d="M0 106L40 119L78 127L97 118L119 130L119 182L0 182Z" fill="#352c4a" opacity="0.55"/><path d="M22 92L34 82L52 78L58 72L68 70L80 74L88 86L120 82L150 77L170 76L172 90L150 96L122 99L92 98L70 102L46 108Z" fill="#a098b0"/><path d="M88 86L120 82L150 77L170 76L172 90L150 95L118 95Z" fill="#bcd0c8"/><path d="M66 71L79 74L84 88L74 90Z" fill="#d6d2e0"/><path d="M48 68L70 70L70 88L52 86Z" fill="#54445a"/><ellipse cx="54" cy="52" rx="17" ry="24" fill="#9c8a9e" transform="rotate(-6 54 52)"/><path d="M38 44C40 34 48 30 56 30L50 60C44 60 39 54 38 44Z" fill="#b0a0b4" opacity="0.75"/><path d="M40 62C46 73 64 75 70 62L68 74C62 81 48 81 42 74Z" fill="#4a3c50"/><path d="M35 46C35 30 47 25 57 26C69 28 73 38 72 52L68 40C62 32 47 31 40 39Z" fill="#3c3040"/><path d="M43 45h9v2.500H43zM58 48h9v2.500h-9z" fill="#6c3448"/><path d="M49 61h10v3H49z" fill="#8c4860"/><path d="M53 50l3 6h-5z" fill="#5a4a5e"/><path d="M92 98L122 99L150 96L172 100L176 122L170 138L130 140L97 118Z" fill="#2b2139"/><path d="M118 95L172 90L174 101L150 103L122 100Z" fill="#c4ccd0" opacity="0.9"/><path d="M172 119L190 117L214 130L210 142L184 140L172 132Z" fill="#dcc4d8"/><path d="M246 124L266 111L292 98L316 88L334 72L344 74L344 126L322 133L296 140L270 134Z" fill="#263e4e"/><path d="M264 113L316 90L334 74L341 80L322 98L270 124Z" fill="#4a747e" opacity="0.6"/><path d="M215 142L244 131L270 134L268 170L246 188L224 183L213 160Z" fill="#465f6e"/><path d="M270 134L296 140L344 126L344 190L260 190Z" fill="#2a2139" opacity="0.85"/><path d="M228 104L234 88L260 70L276 48L296 44L318 48L327 66L322 84L300 80L276 94L250 106Z" fill="#a6345a"/><path d="M282 50L316 50L323 70L298 74Z" fill="#c2426c" opacity="0.9"/><path d="M258 70L276 48L287 58L270 88Z" fill="#4c1c34"/><ellipse cx="256" cy="40" rx="17" ry="26" fill="#80586e" transform="rotate(-18 256 40)"/><path d="M247 46L268 42L272 56L259 66L246 60Z" fill="#9c7086"/><path d="M236 30C238 13 260 5 274 13C282 19 282 29 278 36L272 22L254 16Z" fill="#241c2c"/><path d="M240 34L258 24L270 24L268 40L256 46L244 42Z" fill="#1a1322"/><path d="M237 32L254 18L266 19L258 25L241 36Z" fill="#bca8bc"/><path d="M277 28c5-1 7 6 3 11z" fill="#80586e"/><path d="M240 106L262 98L288 84L304 70L320 66L320 84L292 98L266 110L244 121Z" fill="#b29eb4"/><path d="M222 84h7v20h-7z" fill="#261d2e"/><path d="M221 100L236 93L244 104L242 122L228 130L217 120Z" fill="#dcc6d8"/></g><rect width="344" height="254" fill="url(#png1)"/><rect y="172" width="344" height="82" fill="#221a30" opacity="0.5"/><rect x="0" y="180" width="195" height="20" fill="#5a5068" opacity="0.3"/><rect x="0" y="207" width="344" height="34" fill="#15101c" opacity="0.6"/><circle cx="86" cy="168" r="10" fill="#c02840" opacity="0.2"/><circle cx="112" cy="158" r="8" fill="#c02840" opacity="0.16"/><circle cx="40" cy="192" r="10" fill="#c02840" opacity="0.2"/><circle cx="10" cy="226" r="8" fill="#c02840" opacity="0.28"/><circle cx="62" cy="242" r="10" fill="#c02840" opacity="0.25"/><circle cx="24" cy="250" r="8" fill="#c02840" opacity="0.25"/><circle cx="118" cy="196" r="8" fill="#c02840" opacity="0.15"/><circle cx="8" cy="200" r="6" fill="#c02840" opacity="0.2"/><path d="M8 203.500h158" stroke="#8a8098" stroke-width="1" stroke-dasharray="4 2.500"/><path d="M250 244l6-3 3 2 6-3 2 3-6 3-3-1-6 3z" fill="#e4dfe8"/><g fill="#cfc8d8" opacity="0.6"><rect x="300" y="180" width="1" height="1"/><rect x="320" y="200" width="1" height="1"/><rect x="290" y="215" width="1" height="1"/><rect x="330" y="230" width="1" height="1"/><rect x="310" y="245" width="1" height="1"/><rect x="270" y="205" width="1" height="1"/><rect x="250" y="225" width="1" height="1"/><rect x="335" y="160" width="1" height="1"/><rect x="280" y="240" width="1" height="1"/><rect x="325" y="120" width="1" height="1"/><rect x="240" y="246" width="1" height="1"/><rect x="305" y="225" width="1" height="1"/><rect x="262" y="196" width="1" height="1"/><rect x="338" y="208" width="1" height="1"/><rect x="296" y="170" width="1" height="1"/><rect x="230" y="220" width="1" height="1"/><rect x="215" y="246" width="1" height="1"/></g><text x="8" y="197.5" font-family="Liberation Sans,sans-serif" font-size="14" fill="#6f6782" textLength="110" lengthAdjust="spacingAndGlyphs"><tspan fill="#a83c4c">1</tspan>Kla$ &amp; Царь</text><text x="4" y="220.5" font-family="Liberation Serif,serif" font-size="13.500" fill="#aca4b4" textLength="205" lengthAdjust="spacingAndGlyphs">Я люблю свой рэп и ненавижу ваш...</text><text x="32" y="234.5" font-family="Liberation Serif,serif" font-size="13.500" fill="#aca4b4" textLength="226" lengthAdjust="spacingAndGlyphs"><tspan fill="#c43c4c">И</tspan> мне как-то похуй, если я обижу вас. ©</text></svg>
<div style="left:1041px;top:346px;width:59px;height:14px;background:#eef0f4;border:1px solid #7f9db9;box-sizing:border-box;"></div>
<span class="t" style="left:1047.00px;top:348.61px;font-size:10.5px;color:#9a9a9a;letter-spacing:-0.554px;">100 %</span>
<div style="left:1041px;top:345px;width:218px;height:1px;background:#b4b09c;"></div>
<svg style="left:1134px;top:350px;" width="12" height="9" viewBox="0 0 12 9"><path d="M1.500 7.500L5.500 2.500l4 5z" fill="#fff" stroke="#111" stroke-width="1"/></svg>
<div style="left:1157px;top:354px;width:73px;height:3px;background:#fff;border:1px solid #9a9a9a;border-radius:2px;box-sizing:border-box;"></div>
<svg style="left:1188px;top:349px;" width="10" height="12" viewBox="0 0 10 12"><path d="M1.500 4.500L5 1l3.500 3.500v6h-7z" fill="#fff" stroke="#40a040" stroke-width="1.200"/></svg>
<svg style="left:1238px;top:348px;" width="20" height="11" viewBox="0 0 20 11"><path d="M1 9.500L6 3l4 4 3-3.500 5 6z" fill="#fff" stroke="#111" stroke-width="1.100"/></svg>
<svg style="left:1264px;top:352px;" width="12" height="12" viewBox="0 0 12 12"><path d="M9 3h2M6 6h2M9 6h2M3 9h2M6 9h2M9 9h2" stroke="#a8a8a8" stroke-width="2"/></svg>
<div style="left:1039px;top:367px;width:239px;height:127px;background:#ededed;border:1px solid #4c4c4c;border-radius:4px 4px 2px 2px;box-sizing:border-box;"></div>
<div style="left:1040px;top:368px;width:237px;height:24px;background:linear-gradient(180deg,#f6f6f6 0%,#e4e4e4 40%,#c6c6c6 100%);border-radius:3px 3px 0 0;"></div>
<div style="left:1040px;top:392px;width:237px;height:1px;background:#8e8e8e;"></div>
<div style="left:1044.5px;top:376px;width:47.0px;height:17px;background:#ededed;border:1px solid #8e8e8e;border-bottom:none;border-radius:4px 4px 0 0;box-sizing:border-box;"></div>
<span class="t" style="left:1050.50px;top:379.19px;font-size:11px;color:#222;letter-spacing:-0.037px;">Цвет</span>
<svg style="left:1077.5px;top:380.5px;" width="8" height="8" viewBox="0 0 8 8"><path d="M0.5 0.5l7 7M7.5 0.5l-7 7" stroke="#555" stroke-width="1"/></svg>
<div style="left:1091.5px;top:377px;width:60.0px;height:15px;background:linear-gradient(180deg,#e6e6e6,#cfcfcf);border:1px solid #8e8e8e;border-bottom:none;border-left:none;border-radius:0 4px 0 0;box-sizing:border-box;"></div>
<span class="t" style="left:1099.00px;top:379.19px;font-size:11px;color:#222;letter-spacing:-0.174px;">Образцы</span>
<div style="left:1151.5px;top:377px;width:45.0px;height:15px;background:linear-gradient(180deg,#e6e6e6,#cfcfcf);border:1px solid #8e8e8e;border-bottom:none;border-left:none;border-radius:0 4px 0 0;box-sizing:border-box;"></div>
<span class="t" style="left:1159.00px;top:379.19px;font-size:11px;color:#222;letter-spacing:-0.338px;">Стили</span>
<svg style="left:1250px;top:371px;" width="24" height="8" viewBox="0 0 24 8"><path d="M1 5.500h6" stroke="#555" stroke-width="1.400"/><path d="M13 1l6 6M19 1l-6 6" stroke="#555" stroke-width="1.100"/></svg>
<svg style="left:1257px;top:384px;" width="18" height="8" viewBox="0 0 18 8"><path d="M1 2h5L3.500 5z" fill="#333"/><path d="M8 1.500h8M8 4.500h8M8 7.500h8" stroke="#333" stroke-width="1"/></svg>
<div style="left:1061px;top:416px;width:16px;height:16px;background:#0a78ff;box-shadow:0 0 0 1px #fff,0 0 0 2px #8a8a8a;"></div>
<div style="left:1049px;top:404px;width:16px;height:16px;background:#ff0000;box-shadow:0 0 0 1px #fff,0 0 0 2px #000;"></div>
<span class="t" style="left:1083.00px;top:401.54px;font-size:10px;color:#000;">R</span>
<div style="left:1097px;top:405px;width:100px;height:5px;background:linear-gradient(90deg,#000,#f00);box-shadow:0 0 0 1px #8c8c8c;"></div>
<svg style="left:1191px;top:410px;" width="10" height="8" viewBox="0 0 10 8"><path d="M5 1L9 7H1z" fill="#fff" stroke="#58b058" stroke-width="1"/><path d="M1.500 6.500h7" stroke="#30a030" stroke-width="1.400"/></svg>
<div style="left:1202px;top:400px;width:32px;height:18px;background:#eef0f2;border:1px solid #7f9db9;box-sizing:border-box;"></div>
<span class="t" style="left:1208.00px;top:404.11px;font-size:10.5px;color:#a0a0a0;">255</span>
<span class="t" style="left:1083.00px;top:424.54px;font-size:10px;color:#000;">G</span>
<div style="left:1097px;top:428px;width:100px;height:5px;background:linear-gradient(90deg,#f00,#ff0);box-shadow:0 0 0 1px #8c8c8c;"></div>
<svg style="left:1092px;top:433px;" width="10" height="8" viewBox="0 0 10 8"><path d="M5 1L9 7H1z" fill="#fff" stroke="#58b058" stroke-width="1"/><path d="M1.500 6.500h7" stroke="#30a030" stroke-width="1.400"/></svg>
<div style="left:1202px;top:423px;width:32px;height:18px;background:#eef0f2;border:1px solid #7f9db9;box-sizing:border-box;"></div>
<span class="t" style="left:1208.00px;top:427.11px;font-size:10.5px;color:#a0a0a0;">0</span>
<span class="t" style="left:1083.00px;top:447.54px;font-size:10px;color:#000;">B</span>
<div style="left:1097px;top:451px;width:100px;height:5px;background:linear-gradient(90deg,#f00,#f0f);box-shadow:0 0 0 1px #8c8c8c;"></div>
<svg style="left:1092px;top:456px;" width="10" height="8" viewBox="0 0 10 8"><path d="M5 1L9 7H1z" fill="#fff" stroke="#58b058" stroke-width="1"/><path d="M1.500 6.500h7" stroke="#30a030" stroke-width="1.400"/></svg>
<div style="left:1202px;top:446px;width:32px;height:18px;background:#eef0f2;border:1px solid #7f9db9;box-sizing:border-box;"></div>
<span class="t" style="left:1208.00px;top:450.11px;font-size:10.5px;color:#a0a0a0;">0</span>
<svg style="left:1051px;top:447px;" width="14" height="13" viewBox="0 0 14 13"><path d="M7 1.500L13 12H1z" fill="#ddd" stroke="#222" stroke-width="1.200"/><path d="M7 5v4M7 10v1.500" stroke="#111" stroke-width="1.400"/></svg>
<div style="left:1068px;top:450px;width:11px;height:11px;background:#e83030;border:1px solid #222;box-sizing:border-box;"></div>
<div style="left:1044px;top:472px;width:199px;height:15px;background:linear-gradient(180deg,rgba(255,255,255,0.8) 0%,rgba(255,255,255,0) 50%,rgba(0,0,0,0) 50%,rgba(0,0,0,1) 100%),linear-gradient(90deg,#f00 0%,#ff0 17%,#0f0 34%,#0ff 50%,#00f 67%,#f0f 84%,#f00 100%);"></div>
<div style="left:1235px;top:472px;width:8px;height:7px;background:#fff;"></div>
<div style="left:1235px;top:479px;width:8px;height:8px;background:#000;"></div>
<div style="left:1039px;top:496px;width:239px;height:276px;background:#ededed;border:1px solid #4c4c4c;border-radius:4px 4px 2px 2px;box-sizing:border-box;"></div>
<div style="left:1040px;top:497px;width:237px;height:24px;background:linear-gradient(180deg,#f6f6f6 0%,#e4e4e4 40%,#c6c6c6 100%);border-radius:3px 3px 0 0;"></div>
<div style="left:1040px;top:521px;width:237px;height:1px;background:#8e8e8e;"></div>
<div style="left:1044.5px;top:505px;width:65.0px;height:17px;background:#ededed;border:1px solid #8e8e8e;border-bottom:none;border-radius:4px 4px 0 0;box-sizing:border-box;"></div>
<span class="t" style="left:1050.50px;top:508.19px;font-size:11px;color:#222;letter-spacing:-0.094px;">История</span>
<svg style="left:1095.5px;top:509.5px;" width="8" height="8" viewBox="0 0 8 8"><path d="M0.5 0.5l7 7M7.5 0.5l-7 7" stroke="#555" stroke-width="1"/></svg>
<div style="left:1109.5px;top:506px;width:65.0px;height:15px;background:linear-gradient(180deg,#e6e6e6,#cfcfcf);border:1px solid #8e8e8e;border-bottom:none;border-left:none;border-radius:0 4px 0 0;box-sizing:border-box;"></div>
<span class="t" style="left:1117.25px;top:508.19px;font-size:11px;color:#222;letter-spacing:-0.244px;">Операции</span>
<svg style="left:1250px;top:500px;" width="24" height="8" viewBox="0 0 24 8"><path d="M1 5.500h6" stroke="#555" stroke-width="1.400"/><path d="M13 1l6 6M19 1l-6 6" stroke="#555" stroke-width="1.100"/></svg>
<svg style="left:1257px;top:513px;" width="18" height="8" viewBox="0 0 18 8"><path d="M1 2h5L3.500 5z" fill="#333"/><path d="M8 1.500h8M8 4.500h8M8 7.500h8" stroke="#333" stroke-width="1"/></svg>
<div style="left:1041px;top:522px;width:218px;height:232px;background:#ededed;"></div>
<div style="left:1041px;top:554px;width:218px;height:1px;background:#b4b09c;"></div>
<div style="left:1041px;top:555px;width:218px;height:1px;background:#fff;"></div>
<div style="left:1041px;top:556px;width:218px;height:1px;background:#9a9a9a;"></div>
<div style="left:1063px;top:522px;width:1px;height:155px;background:#b8b4a0;"></div>
<div style="left:1041px;top:677px;width:218px;height:1px;background:#c4c0b0;"></div>
<div style="left:1044px;top:530px;width:15px;height:15px;background:#e0e0e0;border:1px solid #b0b0a0;box-sizing:border-box;"></div>
<svg style="left:1044px;top:530px;" width="15" height="15" viewBox="0 0 15 15"><path d="M11 3l-5 6 1.500 1.500z" fill="#555" stroke="#111" stroke-width="0.800"/><path d="M6 9c-2 0-2 3-4 3.500 2.500 1 5 0 5.500-2z" fill="#222"/><path d="M3 6c1-3 5-4 6-2" fill="none" stroke="#111"/></svg>
<div style="left:1066px;top:526px;width:32px;height:25px;background:#000;"></div>
<svg style="left:1067px;top:527px;" width="30" height="23" viewBox="0 0 344 254" preserveAspectRatio="none"><defs>
<radialGradient id="phg1" gradientUnits="userSpaceOnUse" cx="171" cy="127" r="82"><stop offset="0" stop-color="#f6cfe6" stop-opacity="0.95"/><stop offset="0.12" stop-color="#dcaacb" stop-opacity="0.78"/><stop offset="0.34" stop-color="#b084a6" stop-opacity="0.42"/><stop offset="0.62" stop-color="#8a6488" stop-opacity="0.17"/><stop offset="1" stop-color="#604868" stop-opacity="0"/></radialGradient>
<radialGradient id="phg2" gradientUnits="userSpaceOnUse" cx="338" cy="4" r="120"><stop offset="0" stop-color="#92708e" stop-opacity="1"/><stop offset="0.3" stop-color="#745674" stop-opacity="0.8"/><stop offset="0.65" stop-color="#4a3858" stop-opacity="0.35"/><stop offset="1" stop-color="#3a2c48" stop-opacity="0"/></radialGradient>
<linearGradient id="phs1" x1="0" y1="0" x2="0.15" y2="1"><stop offset="0" stop-color="#c4dcd0"/><stop offset="0.3" stop-color="#8ab8a4"/><stop offset="0.6" stop-color="#4c7c74"/><stop offset="1" stop-color="#2e4a50"/></linearGradient>
<linearGradient id="phs2" x1="0" y1="0" x2="1" y2="0.6"><stop offset="0" stop-color="#cfe6dc"/><stop offset="0.35" stop-color="#86b8a4"/><stop offset="0.75" stop-color="#4a7a72"/><stop offset="1" stop-color="#385c5c"/></linearGradient>
<filter id="phb" x="-5%" y="-5%" width="110%" height="110%"><feGaussianBlur stdDeviation="1.1"/></filter>
</defs><rect width="344" height="254" fill="#2a2139"/><rect width="344" height="44" fill="#261d38"/><rect x="0" y="44" width="44" height="47" fill="#fff" fill-opacity="0.04"/><rect x="44" y="44" width="47" height="47" fill="#fff" fill-opacity="0.09"/><rect x="91" y="44" width="47" height="47" fill="#fff" fill-opacity="0.04"/><rect x="138" y="44" width="47" height="47" fill="#fff" fill-opacity="0.1"/><rect x="185" y="44" width="47" height="47" fill="#fff" fill-opacity="0.03"/><rect x="232" y="44" width="47" height="47" fill="#fff" fill-opacity="0.05"/><rect x="279" y="44" width="47" height="47" fill="#fff" fill-opacity="0.12"/><rect x="0" y="91" width="44" height="47" fill="#fff" fill-opacity="0.08"/><rect x="44" y="91" width="47" height="47" fill="#fff" fill-opacity="0.14"/><rect x="91" y="91" width="47" height="47" fill="#fff" fill-opacity="0.07"/><rect x="138" y="91" width="47" height="47" fill="#fff" fill-opacity="0.12"/><rect x="185" y="91" width="47" height="47" fill="#fff" fill-opacity="0.1"/><rect x="232" y="91" width="47" height="47" fill="#fff" fill-opacity="0.12"/><rect x="279" y="91" width="65" height="47" fill="#fff" fill-opacity="0.02"/><rect x="0" y="138" width="44" height="47" fill="#fff" fill-opacity="0.03"/><rect x="44" y="138" width="47" height="47" fill="#fff" fill-opacity="0.02"/><rect x="91" y="138" width="47" height="47" fill="#fff" fill-opacity="0.04"/><rect x="138" y="138" width="47" height="47" fill="#fff" fill-opacity="0.12"/><rect x="185" y="138" width="47" height="47" fill="#fff" fill-opacity="0.1"/><rect x="232" y="138" width="47" height="47" fill="#fff" fill-opacity="0.03"/><rect x="138" y="185" width="47" height="20" fill="#fff" fill-opacity="0.03"/><rect width="344" height="254" fill="url(#phg2)"/><path d="M52 0h22v10H52zM80 0h30v14H80zM150 0h24v12h-24zM182 0h26v14h-26zM214 0h40v10h-40z" fill="none" stroke="#2a2870" stroke-width="1" opacity="0.6"/><g filter="url(#phb)"><rect x="119" y="76" width="54" height="112" rx="7" fill="url(#phs1)"/><rect x="179" y="77" width="52" height="112" rx="7" fill="url(#phs2)"/><path d="M173 79h6v112h-6z" fill="#1c1626"/><path d="M119 134L172 134L172 190L119 190Z" fill="#2a2038" opacity="0.82"/><path d="M150 136L172 132L182 150L168 190L146 190Z" fill="#5c9484" opacity="0.7"/><path d="M182 136L214 140L216 190L178 190Z" fill="#5e9686" opacity="0.55"/><path d="M170 134L184 134L206 188L190 190Z" fill="#241c30"/><path d="M202 142L190 138L160 190L176 190Z" fill="#241c30"/><path d="M0 89L22 91L46 108L70 102L92 98L97 118L78 127L40 119L0 106Z" fill="#2f4f70"/><path d="M0 89L22 91L46 108L62 104L44 113L0 97Z" fill="#44789a" opacity="0.75"/><path d="M0 106L40 119L78 127L97 118L119 130L119 182L0 182Z" fill="#352c4a" opacity="0.55"/><path d="M22 92L34 82L52 78L58 72L68 70L80 74L88 86L120 82L150 77L170 76L172 90L150 96L122 99L92 98L70 102L46 108Z" fill="#a098b0"/><path d="M88 86L120 82L150 77L170 76L172 90L150 95L118 95Z" fill="#bcd0c8"/><path d="M66 71L79 74L84 88L74 90Z" fill="#d6d2e0"/><path d="M48 68L70 70L70 88L52 86Z" fill="#54445a"/><ellipse cx="54" cy="52" rx="17" ry="24" fill="#9c8a9e" transform="rotate(-6 54 52)"/><path d="M38 44C40 34 48 30 56 30L50 60C44 60 39 54 38 44Z" fill="#b0a0b4" opacity="0.75"/><path d="M40 62C46 73 64 75 70 62L68 74C62 81 48 81 42 74Z" fill="#4a3c50"/><path d="M35 46C35 30 47 25 57 26C69 28 73 38 72 52L68 40C62 32 47 31 40 39Z" fill="#3c3040"/><path d="M43 45h9v2.500H43zM58 48h9v2.500h-9z" fill="#6c3448"/><path d="M49 61h10v3H49z" fill="#8c4860"/><path d="M53 50l3 6h-5z" fill="#5a4a5e"/><path d="M92 98L122 99L150 96L172 100L176 122L170 138L130 140L97 118Z" fill="#2b2139"/><path d="M118 95L172 90L174 101L150 103L122 100Z" fill="#c4ccd0" opacity="0.9"/><path d="M172 119L190 117L214 130L210 142L184 140L172 132Z" fill="#dcc4d8"/><path d="M246 124L266 111L292 98L316 88L334 72L344 74L344 126L322 133L296 140L270 134Z" fill="#263e4e"/><path d="M264 113L316 90L334 74L341 80L322 98L270 124Z" fill="#4a747e" opacity="0.6"/><path d="M215 142L244 131L270 134L268 170L246 188L224 183L213 160Z" fill="#465f6e"/><path d="M270 134L296 140L344 126L344 190L260 190Z" fill="#2a2139" opacity="0.85"/><path d="M228 104L234 88L260 70L276 48L296 44L318 48L327 66L322 84L300 80L276 94L250 106Z" fill="#a6345a"/><path d="M282 50L316 50L323 70L298 74Z" fill="#c2426c" opacity="0.9"/><path d="M258 70L276 48L287 58L270 88Z" fill="#4c1c34"/><ellipse cx="256" cy="40" rx="17" ry="26" fill="#80586e" transform="rotate(-18 256 40)"/><path d="M247 46L268 42L272 56L259 66L246 60Z" fill="#9c7086"/><path d="M236 30C238 13 260 5 274 13C282 19 282 29 278 36L272 22L254 16Z" fill="#241c2c"/><path d="M240 34L258 24L270 24L268 40L256 46L244 42Z" fill="#1a1322"/><path d="M237 32L254 18L266 19L258 25L241 36Z" fill="#bca8bc"/><path d="M277 28c5-1 7 6 3 11z" fill="#80586e"/><path d="M240 106L262 98L288 84L304 70L320 66L320 84L292 98L266 110L244 121Z" fill="#b29eb4"/><path d="M222 84h7v20h-7z" fill="#261d2e"/><path d="M221 100L236 93L244 104L242 122L228 130L217 120Z" fill="#dcc6d8"/></g><rect width="344" height="254" fill="url(#phg1)"/><rect y="172" width="344" height="82" fill="#221a30" opacity="0.5"/><rect x="0" y="180" width="195" height="20" fill="#5a5068" opacity="0.3"/><rect x="0" y="207" width="344" height="34" fill="#15101c" opacity="0.6"/><circle cx="86" cy="168" r="10" fill="#c02840" opacity="0.2"/><circle cx="112" cy="158" r="8" fill="#c02840" opacity="0.16"/><circle cx="40" cy="192" r="10" fill="#c02840" opacity="0.2"/><circle cx="10" cy="226" r="8" fill="#c02840" opacity="0.28"/><circle cx="62" cy="242" r="10" fill="#c02840" opacity="0.25"/><circle cx="24" cy="250" r="8" fill="#c02840" opacity="0.25"/><circle cx="118" cy="196" r="8" fill="#c02840" opacity="0.15"/><circle cx="8" cy="200" r="6" fill="#c02840" opacity="0.2"/><path d="M8 203.500h158" stroke="#8a8098" stroke-width="1" stroke-dasharray="4 2.500"/><path d="M250 244l6-3 3 2 6-3 2 3-6 3-3-1-6 3z" fill="#e4dfe8"/><g fill="#cfc8d8" opacity="0.6"><rect x="300" y="180" width="1" height="1"/><rect x="320" y="200" width="1" height="1"/><rect x="290" y="215" width="1" height="1"/><rect x="330" y="230" width="1" height="1"/><rect x="310" y="245" width="1" height="1"/><rect x="270" y="205" width="1" height="1"/><rect x="250" y="225" width="1" height="1"/><rect x="335" y="160" width="1" height="1"/><rect x="280" y="240" width="1" height="1"/><rect x="325" y="120" width="1" height="1"/><rect x="240" y="246" width="1" height="1"/><rect x="305" y="225" width="1" height="1"/><rect x="262" y="196" width="1" height="1"/><rect x="338" y="208" width="1" height="1"/><rect x="296" y="170" width="1" height="1"/><rect x="230" y="220" width="1" height="1"/><rect x="215" y="246" width="1" height="1"/></g><rect x="8" y="189" width="110" height="9" fill="#6f6782" opacity="0.6"/><rect x="4" y="216" width="205" height="5" fill="#b2aaba" opacity="0.6"/><rect x="32" y="230" width="226" height="5" fill="#b2aaba" opacity="0.6"/></svg>
<span class="t" style="left:1102.00px;top:532.19px;font-size:11px;color:#000;letter-spacing:-0.571px;">1Kla$ и Царь.png</span>
<div style="left:1041px;top:577px;width:218px;height:1px;background:#c4c0b0;"></div>
<div style="left:1045px;top:558px;width:15px;height:15px;background:#f0f0ea;border:1px solid #c4c0b0;box-sizing:border-box;"></div>
<svg style="left:1072px;top:558px;" width="18" height="17" viewBox="0 0 18 17"><rect x="2.500" y="1.500" width="11" height="13" fill="#f8f8f8" stroke="#222"/><path d="M4.500 5h7M4.500 8h7M4.500 11h5" stroke="#333" stroke-width="1.200"/><path d="M11 10v7l5-4z" fill="#111"/></svg>
<span class="t" style="left:1097.00px;top:560.69px;font-size:11px;color:#000;letter-spacing:-0.299px;">Уровни</span>
<div style="left:1041px;top:597px;width:218px;height:1px;background:#c4c0b0;"></div>
<div style="left:1045px;top:578px;width:15px;height:15px;background:#f0f0ea;border:1px solid #c4c0b0;box-sizing:border-box;"></div>
<svg style="left:1072px;top:578px;" width="18" height="16" viewBox="0 0 18 16"><path d="M16.5 1.5l-8.5 8 1.5 1.5z" fill="#b0b0b0" stroke="#555" stroke-width="0.8"/><path d="M7.5 9.5c-2.5 0-2.5 3.500-5.500 4.500 3 1.500 6.500 0 7.500-2.500z" fill="#6a6a6a" stroke="#333" stroke-width="0.6"/></svg>
<span class="t" style="left:1097.00px;top:580.69px;font-size:11px;color:#000;letter-spacing:-0.132px;">Инструмент "Кисть"</span>
<div style="left:1041px;top:617px;width:218px;height:1px;background:#c4c0b0;"></div>
<div style="left:1045px;top:598px;width:15px;height:15px;background:#f0f0ea;border:1px solid #c4c0b0;box-sizing:border-box;"></div>
<svg style="left:1072px;top:598px;" width="18" height="16" viewBox="0 0 18 16"><path d="M16.5 1.5l-8.5 8 1.5 1.5z" fill="#b0b0b0" stroke="#555" stroke-width="0.8"/><path d="M7.5 9.5c-2.5 0-2.5 3.500-5.500 4.500 3 1.500 6.500 0 7.500-2.500z" fill="#6a6a6a" stroke="#333" stroke-width="0.6"/></svg>
<span class="t" style="left:1097.00px;top:600.69px;font-size:11px;color:#000;letter-spacing:-0.132px;">Инструмент "Кисть"</span>
<div style="left:1041px;top:637px;width:218px;height:1px;background:#c4c0b0;"></div>
<div style="left:1045px;top:618px;width:15px;height:15px;background:#f0f0ea;border:1px solid #c4c0b0;box-sizing:border-box;"></div>
<svg style="left:1072px;top:618px;" width="18" height="16" viewBox="0 0 18 16"><path d="M16.5 1.5l-8.5 8 1.5 1.5z" fill="#b0b0b0" stroke="#555" stroke-width="0.8"/><path d="M7.5 9.5c-2.5 0-2.5 3.500-5.500 4.500 3 1.500 6.500 0 7.500-2.500z" fill="#6a6a6a" stroke="#333" stroke-width="0.6"/></svg>
<span class="t" style="left:1097.00px;top:620.69px;font-size:11px;color:#000;letter-spacing:-0.132px;">Инструмент "Кисть"</span>
<div style="left:1041px;top:657px;width:218px;height:1px;background:#c4c0b0;"></div>
<div style="left:1045px;top:638px;width:15px;height:15px;background:#f0f0ea;border:1px solid #c4c0b0;box-sizing:border-box;"></div>
<svg style="left:1072px;top:638px;" width="18" height="16" viewBox="0 0 18 16"><path d="M16.5 1.5l-8.5 8 1.5 1.5z" fill="#b0b0b0" stroke="#555" stroke-width="0.8"/><path d="M7.5 9.5c-2.5 0-2.5 3.500-5.500 4.500 3 1.500 6.500 0 7.500-2.500z" fill="#6a6a6a" stroke="#333" stroke-width="0.6"/></svg>
<span class="t" style="left:1097.00px;top:640.69px;font-size:11px;color:#000;letter-spacing:-0.132px;">Инструмент "Кисть"</span>
<div style="left:1064px;top:657px;width:195px;height:20px;background:#316ac5;"></div>
<div style="left:1045px;top:659px;width:15px;height:15px;background:#f0f0ea;border:1px solid #c4c0b0;box-sizing:border-box;"></div>
<svg style="left:1061px;top:661px;" width="10" height="12" viewBox="0 0 10 12"><path d="M1.500 1.500h3.500l3.500 4.500-3.500 4.500h-3.500z" fill="#fff" stroke="#111" stroke-width="1.200"/></svg>
<svg style="left:1072px;top:659px;" width="18" height="17" viewBox="0 0 18 17"><rect x="2.500" y="1.500" width="11" height="13" fill="#f8f8f8" stroke="#222"/><path d="M4.500 5h7M4.500 8h7M4.500 11h5" stroke="#333" stroke-width="1.200"/><path d="M11 10v7l5-4z" fill="#111"/></svg>
<span class="t" style="left:1097.00px;top:661.19px;font-size:11px;color:#fff;font-weight:bold;letter-spacing:-0.324px;">Создать дубликат слоя</span>
<div style="left:1259px;top:522px;width:16px;height:232px;background:linear-gradient(90deg,#f4f3ec,#fefefb 40%,#fefefb);"></div>
<div style="left:1260px;top:523px;width:15px;height:16px;background:linear-gradient(135deg,#f6f5ee,#eceade);border:1px solid #fff;border-radius:3px;box-sizing:border-box;box-shadow:0 0 0 0.5px #e4e1d0;"></div><svg style="left:1260px;top:523px;" width="15" height="16" viewBox="0 0 15 16"><path d="M4 10.500l3.500-4 3.500 4" fill="none" stroke="#c9c7ba" stroke-width="2"/></svg>
<div style="left:1260px;top:737px;width:15px;height:16px;background:linear-gradient(135deg,#f6f5ee,#eceade);border:1px solid #fff;border-radius:3px;box-sizing:border-box;box-shadow:0 0 0 0.5px #e4e1d0;"></div><svg style="left:1260px;top:737px;" width="15" height="16" viewBox="0 0 15 16"><path d="M4 6.500l3.500 4 3.500-4" fill="none" stroke="#c9c7ba" stroke-width="2"/></svg>
<div style="left:1041px;top:754px;width:234px;height:1px;background:#b4b09c;"></div>
<svg style="left:1180px;top:755px;" width="14" height="13" viewBox="0 0 14 13"><rect x="1.500" y="2.500" width="10" height="8" fill="#e8e8e8" stroke="#444"/><rect x="3.500" y="5.500" width="6" height="3" fill="#fff" stroke="#444"/></svg>
<svg style="left:1210px;top:755px;" width="15" height="13" viewBox="0 0 15 13"><rect x="1.500" y="3.500" width="12" height="8" rx="1" fill="#ccc" stroke="#333"/><circle cx="7.500" cy="7.500" r="2.500" fill="#fff" stroke="#333"/><rect x="9" y="1.500" width="3" height="2" fill="#333"/></svg>
<svg style="left:1240px;top:754px;" width="13" height="14" viewBox="0 0 13 14"><path d="M3 4.500h7l-1 8.500h-5z" fill="#eee" stroke="#333"/><path d="M2 3.500h9" stroke="#222" stroke-width="1.600"/><path d="M5 6v5M8 6v5" stroke="#555"/></svg>
<svg style="left:1264px;top:759px;" width="12" height="12" viewBox="0 0 12 12"><path d="M9 3h2M6 6h2M9 6h2M3 9h2M6 9h2M9 9h2" stroke="#a8a8a8" stroke-width="2"/></svg>
<div style="left:1039px;top:775px;width:239px;height:212px;background:#ededed;border:1px solid #4c4c4c;border-radius:4px 4px 2px 2px;box-sizing:border-box;"></div>
<div style="left:1040px;top:776px;width:237px;height:24px;background:linear-gradient(180deg,#f6f6f6 0%,#e4e4e4 40%,#c6c6c6 100%);border-radius:3px 3px 0 0;"></div>
<div style="left:1040px;top:800px;width:237px;height:1px;background:#8e8e8e;"></div>
<div style="left:1044.5px;top:784px;width:48.0px;height:17px;background:#ededed;border:1px solid #8e8e8e;border-bottom:none;border-radius:4px 4px 0 0;box-sizing:border-box;"></div>
<span class="t" style="left:1050.50px;top:787.19px;font-size:11px;color:#222;letter-spacing:-0.687px;">Слои</span>
<svg style="left:1078.5px;top:788.5px;" width="8" height="8" viewBox="0 0 8 8"><path d="M0.5 0.5l7 7M7.5 0.5l-7 7" stroke="#555" stroke-width="1"/></svg>
<div style="left:1092.5px;top:785px;width:53.5px;height:15px;background:linear-gradient(180deg,#e6e6e6,#cfcfcf);border:1px solid #8e8e8e;border-bottom:none;border-left:none;border-radius:0 4px 0 0;box-sizing:border-box;"></div>
<span class="t" style="left:1099.75px;top:787.19px;font-size:11px;color:#222;letter-spacing:-0.007px;">Каналы</span>
<div style="left:1146px;top:785px;width:57.5px;height:15px;background:linear-gradient(180deg,#e6e6e6,#cfcfcf);border:1px solid #8e8e8e;border-bottom:none;border-left:none;border-radius:0 4px 0 0;box-sizing:border-box;"></div>
<span class="t" style="left:1152.75px;top:787.19px;font-size:11px;color:#222;letter-spacing:0.120px;">Контуры</span>
<svg style="left:1250px;top:779px;" width="24" height="8" viewBox="0 0 24 8"><path d="M1 5.500h6" stroke="#555" stroke-width="1.400"/><path d="M13 1l6 6M19 1l-6 6" stroke="#555" stroke-width="1.100"/></svg>
<svg style="left:1257px;top:792px;" width="18" height="8" viewBox="0 0 18 8"><path d="M1 2h5L3.500 5z" fill="#333"/><path d="M8 1.500h8M8 4.500h8M8 7.500h8" stroke="#333" stroke-width="1"/></svg>
<div style="left:1044px;top:805px;width:122px;height:16px;background:#fff;border:1px solid #c9c7ba;box-sizing:border-box;"></div>
<span class="t" style="left:1047.00px;top:807.69px;font-size:11px;color:#aca899;letter-spacing:-0.613px;">Нормальный</span>
<div style="left:1149px;top:806px;width:16px;height:14px;background:#ecebe4;border:1px solid #d8d6c8;border-radius:2px;box-sizing:border-box;"></div>
<svg style="left:1149px;top:806px;" width="16" height="14" viewBox="0 0 16 14"><path d="M4.500 5.500l3.500 3.500 3.500-3.500" fill="none" stroke="#c4c2b4" stroke-width="1.800"/></svg>
<span class="t" style="left:1169.50px;top:807.69px;font-size:11px;color:#000;letter-spacing:-0.322px;">Непрозр.:</span>
<div style="left:1221px;top:805px;width:50px;height:16px;background:#eeeeea;border:1px solid #c9c7ba;box-sizing:border-box;"></div>
<span class="t" style="left:1227.00px;top:807.69px;font-size:11px;color:#aca899;letter-spacing:-1.033px;">100%</span>
<div style="left:1255px;top:806px;width:15px;height:14px;background:linear-gradient(180deg,#d4e0fc,#a8c0f4);"></div>
<svg style="left:1259px;top:809px;" width="7" height="8" viewBox="0 0 7 8"><path d="M1 0.500l5 3.500-5 3.500z" fill="#2a50b0"/></svg>
<div style="left:1221px;top:831px;width:50px;height:16px;background:#eeeeea;border:1px solid #c9c7ba;box-sizing:border-box;"></div>
<span class="t" style="left:1227.00px;top:833.69px;font-size:11px;color:#aca899;letter-spacing:-1.033px;">100%</span>
<div style="left:1255px;top:832px;width:15px;height:14px;background:linear-gradient(180deg,#d4e0fc,#a8c0f4);"></div>
<svg style="left:1259px;top:835px;" width="7" height="8" viewBox="0 0 7 8"><path d="M1 0.500l5 3.500-5 3.500z" fill="#2a50b0"/></svg>
<span class="t" style="left:1047.00px;top:833.69px;font-size:11px;color:#b4b0a4;letter-spacing:0.127px;">Закрепить:</span>
<div style="left:1041px;top:825px;width:234px;height:1px;background:#c4c0b0;"></div>
<svg style="left:1107px;top:832px;" width="62" height="14" viewBox="0 0 62 14"><rect x="0.5" y="1.5" width="10" height="10" fill="#fff" stroke="#aaa"/><path d="M1 2h5v5H1zM6 7h4v4H6z" fill="#ccc"/><path d="M19 12l8-9" stroke="#888" stroke-width="1.6"/><path d="M18 13l2-3 1.500 1.500z" fill="#666"/><path d="M39.500 1.500v11M34 7h11" stroke="#555" stroke-width="1"/><path d="M39.500 0l-2 2.500h4zM39.500 14l-2-2.500h4zM33 7l2.500-2v4zM46 7l-2.500-2v4z" fill="#555"/><rect x="52.500" y="6.500" width="8" height="6" fill="#999" stroke="#555"/><path d="M54 6.500v-2a2.500 2.500 0 015 0v2" fill="none" stroke="#555" stroke-width="1.300"/></svg>
<span class="t" style="left:1176.00px;top:833.69px;font-size:11px;color:#000;letter-spacing:-0.612px;">Заливка:</span>
<div style="left:1041px;top:851px;width:218px;height:1px;background:#9a9a9a;"></div>
<div style="left:1041px;top:852px;width:218px;height:32px;background:#316ac5;"></div>
<div style="left:1041px;top:852px;width:22px;height:64px;background:#ededed;"></div>
<div style="left:1062px;top:852px;width:1px;height:64px;background:#b8b4a0;"></div>
<div style="left:1041px;top:884px;width:218px;height:1px;background:#c4c0b0;"></div>
<div style="left:1041px;top:916px;width:218px;height:1px;background:#b4b09c;"></div>
<div style="left:1044px;top:858px;width:17px;height:17px;background:#f4f4f0;border:1px solid #d4d0c4;box-sizing:border-box;"></div>
<svg style="left:1045px;top:860px;" width="15" height="12" viewBox="0 0 15 12"><path d="M1 6c3-5 10-5 13 0-3 5-10 5-13 0z" fill="#fff" stroke="#111" stroke-width="1.200"/><circle cx="7.500" cy="6" r="2.800" fill="#111"/><path d="M1 5c3-4 10-4 13 0" fill="none" stroke="#111" stroke-width="1.800"/></svg>
<div style="left:1044px;top:890px;width:17px;height:17px;background:#f4f4f0;border:1px solid #d4d0c4;box-sizing:border-box;"></div>
<svg style="left:1045px;top:892px;" width="15" height="12" viewBox="0 0 15 12"><path d="M1 6c3-5 10-5 13 0-3 5-10 5-13 0z" fill="#fff" stroke="#111" stroke-width="1.200"/><circle cx="7.500" cy="6" r="2.800" fill="#111"/><path d="M1 5c3-4 10-4 13 0" fill="none" stroke="#111" stroke-width="1.800"/></svg>
<div style="left:1066px;top:853px;width:34px;height:29px;background:#000;box-shadow:inset 0 0 0 1px #fff,inset 0 0 0 2px #000;"></div>
<svg style="left:1069px;top:856px;" width="28" height="23" viewBox="0 0 344 254" preserveAspectRatio="none"><defs>
<radialGradient id="pl1g1" gradientUnits="userSpaceOnUse" cx="171" cy="127" r="82"><stop offset="0" stop-color="#f6cfe6" stop-opacity="0.95"/><stop offset="0.12" stop-color="#dcaacb" stop-opacity="0.78"/><stop offset="0.34" stop-color="#b084a6" stop-opacity="0.42"/><stop offset="0.62" stop-color="#8a6488" stop-opacity="0.17"/><stop offset="1" stop-color="#604868" stop-opacity="0"/></radialGradient>
<radialGradient id="pl1g2" gradientUnits="userSpaceOnUse" cx="338" cy="4" r="120"><stop offset="0" stop-color="#92708e" stop-opacity="1"/><stop offset="0.3" stop-color="#745674" stop-opacity="0.8"/><stop offset="0.65" stop-color="#4a3858" stop-opacity="0.35"/><stop offset="1" stop-color="#3a2c48" stop-opacity="0"/></radialGradient>
<linearGradient id="pl1s1" x1="0" y1="0" x2="0.15" y2="1"><stop offset="0" stop-color="#c4dcd0"/><stop offset="0.3" stop-color="#8ab8a4"/><stop offset="0.6" stop-color="#4c7c74"/><stop offset="1" stop-color="#2e4a50"/></linearGradient>
<linearGradient id="pl1s2" x1="0" y1="0" x2="1" y2="0.6"><stop offset="0" stop-color="#cfe6dc"/><stop offset="0.35" stop-color="#86b8a4"/><stop offset="0.75" stop-color="#4a7a72"/><stop offset="1" stop-color="#385c5c"/></linearGradient>
<filter id="pl1b" x="-5%" y="-5%" width="110%" height="110%"><feGaussianBlur stdDeviation="1.1"/></filter>
</defs><rect width="344" height="254" fill="#2a2139"/><rect width="344" height="44" fill="#261d38"/><rect x="0" y="44" width="44" height="47" fill="#fff" fill-opacity="0.04"/><rect x="44" y="44" width="47" height="47" fill="#fff" fill-opacity="0.09"/><rect x="91" y="44" width="47" height="47" fill="#fff" fill-opacity="0.04"/><rect x="138" y="44" width="47" height="47" fill="#fff" fill-opacity="0.1"/><rect x="185" y="44" width="47" height="47" fill="#fff" fill-opacity="0.03"/><rect x="232" y="44" width="47" height="47" fill="#fff" fill-opacity="0.05"/><rect x="279" y="44" width="47" height="47" fill="#fff" fill-opacity="0.12"/><rect x="0" y="91" width="44" height="47" fill="#fff" fill-opacity="0.08"/><rect x="44" y="91" width="47" height="47" fill="#fff" fill-opacity="0.14"/><rect x="91" y="91" width="47" height="47" fill="#fff" fill-opacity="0.07"/><rect x="138" y="91" width="47" height="47" fill="#fff" fill-opacity="0.12"/><rect x="185" y="91" width="47" height="47" fill="#fff" fill-opacity="0.1"/><rect x="232" y="91" width="47" height="47" fill="#fff" fill-opacity="0.12"/><rect x="279" y="91" width="65" height="47" fill="#fff" fill-opacity="0.02"/><rect x="0" y="138" width="44" height="47" fill="#fff" fill-opacity="0.03"/><rect x="44" y="138" width="47" height="47" fill="#fff" fill-opacity="0.02"/><rect x="91" y="138" width="47" height="47" fill="#fff" fill-opacity="0.04"/><rect x="138" y="138" width="47" height="47" fill="#fff" fill-opacity="0.12"/><rect x="185" y="138" width="47" height="47" fill="#fff" fill-opacity="0.1"/><rect x="232" y="138" width="47" height="47" fill="#fff" fill-opacity="0.03"/><rect x="138" y="185" width="47" height="20" fill="#fff" fill-opacity="0.03"/><rect width="344" height="254" fill="url(#pl1g2)"/><path d="M52 0h22v10H52zM80 0h30v14H80zM150 0h24v12h-24zM182 0h26v14h-26zM214 0h40v10h-40z" fill="none" stroke="#2a2870" stroke-width="1" opacity="0.6"/><g filter="url(#pl1b)"><rect x="119" y="76" width="54" height="112" rx="7" fill="url(#pl1s1)"/><rect x="179" y="77" width="52" height="112" rx="7" fill="url(#pl1s2)"/><path d="M173 79h6v112h-6z" fill="#1c1626"/><path d="M119 134L172 134L172 190L119 190Z" fill="#2a2038" opacity="0.82"/><path d="M150 136L172 132L182 150L168 190L146 190Z" fill="#5c9484" opacity="0.7"/><path d="M182 136L214 140L216 190L178 190Z" fill="#5e9686" opacity="0.55"/><path d="M170 134L184 134L206 188L190 190Z" fill="#241c30"/><path d="M202 142L190 138L160 190L176 190Z" fill="#241c30"/><path d="M0 89L22 91L46 108L70 102L92 98L97 118L78 127L40 119L0 106Z" fill="#2f4f70"/><path d="M0 89L22 91L46 108L62 104L44 113L0 97Z" fill="#44789a" opacity="0.75"/><path d="M0 106L40 119L78 127L97 118L119 130L119 182L0 182Z" fill="#352c4a" opacity="0.55"/><path d="M22 92L34 82L52 78L58 72L68 70L80 74L88 86L120 82L150 77L170 76L172 90L150 96L122 99L92 98L70 102L46 108Z" fill="#a098b0"/><path d="M88 86L120 82L150 77L170 76L172 90L150 95L118 95Z" fill="#bcd0c8"/><path d="M66 71L79 74L84 88L74 90Z" fill="#d6d2e0"/><path d="M48 68L70 70L70 88L52 86Z" fill="#54445a"/><ellipse cx="54" cy="52" rx="17" ry="24" fill="#9c8a9e" transform="rotate(-6 54 52)"/><path d="M38 44C40 34 48 30 56 30L50 60C44 60 39 54 38 44Z" fill="#b0a0b4" opacity="0.75"/><path d="M40 62C46 73 64 75 70 62L68 74C62 81 48 81 42 74Z" fill="#4a3c50"/><path d="M35 46C35 30 47 25 57 26C69 28 73 38 72 52L68 40C62 32 47 31 40 39Z" fill="#3c3040"/><path d="M43 45h9v2.500H43zM58 48h9v2.500h-9z" fill="#6c3448"/><path d="M49 61h10v3H49z" fill="#8c4860"/><path d="M53 50l3 6h-5z" fill="#5a4a5e"/><path d="M92 98L122 99L150 96L172 100L176 122L170 138L130 140L97 118Z" fill="#2b2139"/><path d="M118 95L172 90L174 101L150 103L122 100Z" fill="#c4ccd0" opacity="0.9"/><path d="M172 119L190 117L214 130L210 142L184 140L172 132Z" fill="#dcc4d8"/><path d="M246 124L266 111L292 98L316 88L334 72L344 74L344 126L322 133L296 140L270 134Z" fill="#263e4e"/><path d="M264 113L316 90L334 74L341 80L322 98L270 124Z" fill="#4a747e" opacity="0.6"/><path d="M215 142L244 131L270 134L268 170L246 188L224 183L213 160Z" fill="#465f6e"/><path d="M270 134L296 140L344 126L344 190L260 190Z" fill="#2a2139" opacity="0.85"/><path d="M228 104L234 88L260 70L276 48L296 44L318 48L327 66L322 84L300 80L276 94L250 106Z" fill="#a6345a"/><path d="M282 50L316 50L323 70L298 74Z" fill="#c2426c" opacity="0.9"/><path d="M258 70L276 48L287 58L270 88Z" fill="#4c1c34"/><ellipse cx="256" cy="40" rx="17" ry="26" fill="#80586e" transform="rotate(-18 256 40)"/><path d="M247 46L268 42L272 56L259 66L246 60Z" fill="#9c7086"/><path d="M236 30C238 13 260 5 274 13C282 19 282 29 278 36L272 22L254 16Z" fill="#241c2c"/><path d="M240 34L258 24L270 24L268 40L256 46L244 42Z" fill="#1a1322"/><path d="M237 32L254 18L266 19L258 25L241 36Z" fill="#bca8bc"/><path d="M277 28c5-1 7 6 3 11z" fill="#80586e"/><path d="M240 106L262 98L288 84L304 70L320 66L320 84L292 98L266 110L244 121Z" fill="#b29eb4"/><path d="M222 84h7v20h-7z" fill="#261d2e"/><path d="M221 100L236 93L244 104L242 122L228 130L217 120Z" fill="#dcc6d8"/></g><rect width="344" height="254" fill="url(#pl1g1)"/><rect y="172" width="344" height="82" fill="#221a30" opacity="0.5"/><rect x="0" y="180" width="195" height="20" fill="#5a5068" opacity="0.3"/><rect x="0" y="207" width="344" height="34" fill="#15101c" opacity="0.6"/><circle cx="86" cy="168" r="10" fill="#c02840" opacity="0.2"/><circle cx="112" cy="158" r="8" fill="#c02840" opacity="0.16"/><circle cx="40" cy="192" r="10" fill="#c02840" opacity="0.2"/><circle cx="10" cy="226" r="8" fill="#c02840" opacity="0.28"/><circle cx="62" cy="242" r="10" fill="#c02840" opacity="0.25"/><circle cx="24" cy="250" r="8" fill="#c02840" opacity="0.25"/><circle cx="118" cy="196" r="8" fill="#c02840" opacity="0.15"/><circle cx="8" cy="200" r="6" fill="#c02840" opacity="0.2"/><path d="M8 203.500h158" stroke="#8a8098" stroke-width="1" stroke-dasharray="4 2.500"/><path d="M250 244l6-3 3 2 6-3 2 3-6 3-3-1-6 3z" fill="#e4dfe8"/><g fill="#cfc8d8" opacity="0.6"><rect x="300" y="180" width="1" height="1"/><rect x="320" y="200" width="1" height="1"/><rect x="290" y="215" width="1" height="1"/><rect x="330" y="230" width="1" height="1"/><rect x="310" y="245" width="1" height="1"/><rect x="270" y="205" width="1" height="1"/><rect x="250" y="225" width="1" height="1"/><rect x="335" y="160" width="1" height="1"/><rect x="280" y="240" width="1" height="1"/><rect x="325" y="120" width="1" height="1"/><rect x="240" y="246" width="1" height="1"/><rect x="305" y="225" width="1" height="1"/><rect x="262" y="196" width="1" height="1"/><rect x="338" y="208" width="1" height="1"/><rect x="296" y="170" width="1" height="1"/><rect x="230" y="220" width="1" height="1"/><rect x="215" y="246" width="1" height="1"/></g><rect x="8" y="189" width="110" height="9" fill="#6f6782" opacity="0.6"/><rect x="4" y="216" width="205" height="5" fill="#b2aaba" opacity="0.6"/><rect x="32" y="230" width="226" height="5" fill="#b2aaba" opacity="0.6"/></svg>
<svg style="left:1068px;top:887px;" width="30" height="25" viewBox="0 0 344 254" preserveAspectRatio="none"><defs>
<radialGradient id="pl2g1" gradientUnits="userSpaceOnUse" cx="171" cy="127" r="82"><stop offset="0" stop-color="#f6cfe6" stop-opacity="0.95"/><stop offset="0.12" stop-color="#dcaacb" stop-opacity="0.78"/><stop offset="0.34" stop-color="#b084a6" stop-opacity="0.42"/><stop offset="0.62" stop-color="#8a6488" stop-opacity="0.17"/><stop offset="1" stop-color="#604868" stop-opacity="0"/></radialGradient>
<radialGradient id="pl2g2" gradientUnits="userSpaceOnUse" cx="338" cy="4" r="120"><stop offset="0" stop-color="#92708e" stop-opacity="1"/><stop offset="0.3" stop-color="#745674" stop-opacity="0.8"/><stop offset="0.65" stop-color="#4a3858" stop-opacity="0.35"/><stop offset="1" stop-color="#3a2c48" stop-opacity="0"/></radialGradient>
<linearGradient id="pl2s1" x1="0" y1="0" x2="0.15" y2="1"><stop offset="0" stop-color="#c4dcd0"/><stop offset="0.3" stop-color="#8ab8a4"/><stop offset="0.6" stop-color="#4c7c74"/><stop offset="1" stop-color="#2e4a50"/></linearGradient>
<linearGradient id="pl2s2" x1="0" y1="0" x2="1" y2="0.6"><stop offset="0" stop-color="#cfe6dc"/><stop offset="0.35" stop-color="#86b8a4"/><stop offset="0.75" stop-color="#4a7a72"/><stop offset="1" stop-color="#385c5c"/></linearGradient>
<filter id="pl2b" x="-5%" y="-5%" width="110%" height="110%"><feGaussianBlur stdDeviation="1.1"/></filter>
</defs><rect width="344" height="254" fill="#2a2139"/><rect width="344" height="44" fill="#261d38"/><rect x="0" y="44" width="44" height="47" fill="#fff" fill-opacity="0.04"/><rect x="44" y="44" width="47" height="47" fill="#fff" fill-opacity="0.09"/><rect x="91" y="44" width="47" height="47" fill="#fff" fill-opacity="0.04"/><rect x="138" y="44" width="47" height="47" fill="#fff" fill-opacity="0.1"/><rect x="185" y="44" width="47" height="47" fill="#fff" fill-opacity="0.03"/><rect x="232" y="44" width="47" height="47" fill="#fff" fill-opacity="0.05"/><rect x="279" y="44" width="47" height="47" fill="#fff" fill-opacity="0.12"/><rect x="0" y="91" width="44" height="47" fill="#fff" fill-opacity="0.08"/><rect x="44" y="91" width="47" height="47" fill="#fff" fill-opacity="0.14"/><rect x="91" y="91" width="47" height="47" fill="#fff" fill-opacity="0.07"/><rect x="138" y="91" width="47" height="47" fill="#fff" fill-opacity="0.12"/><rect x="185" y="91" width="47" height="47" fill="#fff" fill-opacity="0.1"/><rect x="232" y="91" width="47" height="47" fill="#fff" fill-opacity="0.12"/><rect x="279" y="91" width="65" height="47" fill="#fff" fill-opacity="0.02"/><rect x="0" y="138" width="44" height="47" fill="#fff" fill-opacity="0.03"/><rect x="44" y="138" width="47" height="47" fill="#fff" fill-opacity="0.02"/><rect x="91" y="138" width="47" height="47" fill="#fff" fill-opacity="0.04"/><rect x="138" y="138" width="47" height="47" fill="#fff" fill-opacity="0.12"/><rect x="185" y="138" width="47" height="47" fill="#fff" fill-opacity="0.1"/><rect x="232" y="138" width="47" height="47" fill="#fff" fill-opacity="0.03"/><rect x="138" y="185" width="47" height="20" fill="#fff" fill-opacity="0.03"/><rect width="344" height="254" fill="url(#pl2g2)"/><path d="M52 0h22v10H52zM80 0h30v14H80zM150 0h24v12h-24zM182 0h26v14h-26zM214 0h40v10h-40z" fill="none" stroke="#2a2870" stroke-width="1" opacity="0.6"/><g filter="url(#pl2b)"><rect x="119" y="76" width="54" height="112" rx="7" fill="url(#pl2s1)"/><rect x="179" y="77" width="52" height="112" rx="7" fill="url(#pl2s2)"/><path d="M173 79h6v112h-6z" fill="#1c1626"/><path d="M119 134L172 134L172 190L119 190Z" fill="#2a2038" opacity="0.82"/><path d="M150 136L172 132L182 150L168 190L146 190Z" fill="#5c9484" opacity="0.7"/><path d="M182 136L214 140L216 190L178 190Z" fill="#5e9686" opacity="0.55"/><path d="M170 134L184 134L206 188L190 190Z" fill="#241c30"/><path d="M202 142L190 138L160 190L176 190Z" fill="#241c30"/><path d="M0 89L22 91L46 108L70 102L92 98L97 118L78 127L40 119L0 106Z" fill="#2f4f70"/><path d="M0 89L22 91L46 108L62 104L44 113L0 97Z" fill="#44789a" opacity="0.75"/><path d="M0 106L40 119L78 127L97 118L119 130L119 182L0 182Z" fill="#352c4a" opacity="0.55"/><path d="M22 92L34 82L52 78L58 72L68 70L80 74L88 86L120 82L150 77L170 76L172 90L150 96L122 99L92 98L70 102L46 108Z" fill="#a098b0"/><path d="M88 86L120 82L150 77L170 76L172 90L150 95L118 95Z" fill="#bcd0c8"/><path d="M66 71L79 74L84 88L74 90Z" fill="#d6d2e0"/><path d="M48 68L70 70L70 88L52 86Z" fill="#54445a"/><ellipse cx="54" cy="52" rx="17" ry="24" fill="#9c8a9e" transform="rotate(-6 54 52)"/><path d="M38 44C40 34 48 30 56 30L50 60C44 60 39 54 38 44Z" fill="#b0a0b4" opacity="0.75"/><path d="M40 62C46 73 64 75 70 62L68 74C62 81 48 81 42 74Z" fill="#4a3c50"/><path d="M35 46C35 30 47 25 57 26C69 28 73 38 72 52L68 40C62 32 47 31 40 39Z" fill="#3c3040"/><path d="M43 45h9v2.500H43zM58 48h9v2.500h-9z" fill="#6c3448"/><path d="M49 61h10v3H49z" fill="#8c4860"/><path d="M53 50l3 6h-5z" fill="#5a4a5e"/><path d="M92 98L122 99L150 96L172 100L176 122L170 138L130 140L97 118Z" fill="#2b2139"/><path d="M118 95L172 90L174 101L150 103L122 100Z" fill="#c4ccd0" opacity="0.9"/><path d="M172 119L190 117L214 130L210 142L184 140L172 132Z" fill="#dcc4d8"/><path d="M246 124L266 111L292 98L316 88L334 72L344 74L344 126L322 133L296 140L270 134Z" fill="#263e4e"/><path d="M264 113L316 90L334 74L341 80L322 98L270 124Z" fill="#4a747e" opacity="0.6"/><path d="M215 142L244 131L270 134L268 170L246 188L224 183L213 160Z" fill="#465f6e"/><path d="M270 134L296 140L344 126L344 190L260 190Z" fill="#2a2139" opacity="0.85"/><path d="M228 104L234 88L260 70L276 48L296 44L318 48L327 66L322 84L300 80L276 94L250 106Z" fill="#a6345a"/><path d="M282 50L316 50L323 70L298 74Z" fill="#c2426c" opacity="0.9"/><path d="M258 70L276 48L287 58L270 88Z" fill="#4c1c34"/><ellipse cx="256" cy="40" rx="17" ry="26" fill="#80586e" transform="rotate(-18 256 40)"/><path d="M247 46L268 42L272 56L259 66L246 60Z" fill="#9c7086"/><path d="M236 30C238 13 260 5 274 13C282 19 282 29 278 36L272 22L254 16Z" fill="#241c2c"/><path d="M240 34L258 24L270 24L268 40L256 46L244 42Z" fill="#1a1322"/><path d="M237 32L254 18L266 19L258 25L241 36Z" fill="#bca8bc"/><path d="M277 28c5-1 7 6 3 11z" fill="#80586e"/><path d="M240 106L262 98L288 84L304 70L320 66L320 84L292 98L266 110L244 121Z" fill="#b29eb4"/><path d="M222 84h7v20h-7z" fill="#261d2e"/><path d="M221 100L236 93L244 104L242 122L228 130L217 120Z" fill="#dcc6d8"/></g><rect width="344" height="254" fill="url(#pl2g1)"/><rect y="172" width="344" height="82" fill="#221a30" opacity="0.5"/><rect x="0" y="180" width="195" height="20" fill="#5a5068" opacity="0.3"/><rect x="0" y="207" width="344" height="34" fill="#15101c" opacity="0.6"/><circle cx="86" cy="168" r="10" fill="#c02840" opacity="0.2"/><circle cx="112" cy="158" r="8" fill="#c02840" opacity="0.16"/><circle cx="40" cy="192" r="10" fill="#c02840" opacity="0.2"/><circle cx="10" cy="226" r="8" fill="#c02840" opacity="0.28"/><circle cx="62" cy="242" r="10" fill="#c02840" opacity="0.25"/><circle cx="24" cy="250" r="8" fill="#c02840" opacity="0.25"/><circle cx="118" cy="196" r="8" fill="#c02840" opacity="0.15"/><circle cx="8" cy="200" r="6" fill="#c02840" opacity="0.2"/><path d="M8 203.500h158" stroke="#8a8098" stroke-width="1" stroke-dasharray="4 2.500"/><path d="M250 244l6-3 3 2 6-3 2 3-6 3-3-1-6 3z" fill="#e4dfe8"/><g fill="#cfc8d8" opacity="0.6"><rect x="300" y="180" width="1" height="1"/><rect x="320" y="200" width="1" height="1"/><rect x="290" y="215" width="1" height="1"/><rect x="330" y="230" width="1" height="1"/><rect x="310" y="245" width="1" height="1"/><rect x="270" y="205" width="1" height="1"/><rect x="250" y="225" width="1" height="1"/><rect x="335" y="160" width="1" height="1"/><rect x="280" y="240" width="1" height="1"/><rect x="325" y="120" width="1" height="1"/><rect x="240" y="246" width="1" height="1"/><rect x="305" y="225" width="1" height="1"/><rect x="262" y="196" width="1" height="1"/><rect x="338" y="208" width="1" height="1"/><rect x="296" y="170" width="1" height="1"/><rect x="230" y="220" width="1" height="1"/><rect x="215" y="246" width="1" height="1"/></g><rect x="8" y="189" width="110" height="9" fill="#6f6782" opacity="0.6"/><rect x="4" y="216" width="205" height="5" fill="#b2aaba" opacity="0.6"/><rect x="32" y="230" width="226" height="5" fill="#b2aaba" opacity="0.6"/></svg>
<span class="t" style="left:1106.00px;top:862.69px;font-size:11px;color:#fff;font-weight:bold;letter-spacing:-0.205px;">Задний план (копия)</span>
<span class="t" style="left:1106.00px;top:894.69px;font-size:11px;color:#000;font-style:italic;letter-spacing:-0.338px;">Задний план</span>
<svg style="left:1233px;top:893px;" width="10" height="13" viewBox="0 0 10 13"><rect x="1.500" y="5.500" width="7" height="6" fill="#ddd" stroke="#222"/><path d="M3 5.500v-2a2 2 0 014 0v2" fill="none" stroke="#222" stroke-width="1.200"/></svg>
<div style="left:1259px;top:851px;width:16px;height:116px;background:linear-gradient(90deg,#f4f3ec,#fefefb 40%,#fefefb);"></div>
<div style="left:1260px;top:852px;width:15px;height:16px;background:linear-gradient(135deg,#f6f5ee,#eceade);border:1px solid #fff;border-radius:3px;box-sizing:border-box;box-shadow:0 0 0 0.5px #e4e1d0;"></div><svg style="left:1260px;top:852px;" width="15" height="16" viewBox="0 0 15 16"><path d="M4 10.500l3.500-4 3.500 4" fill="none" stroke="#c9c7ba" stroke-width="2"/></svg>
<div style="left:1260px;top:950px;width:15px;height:16px;background:linear-gradient(135deg,#f6f5ee,#eceade);border:1px solid #fff;border-radius:3px;box-sizing:border-box;box-shadow:0 0 0 0.5px #e4e1d0;"></div><svg style="left:1260px;top:950px;" width="15" height="16" viewBox="0 0 15 16"><path d="M4 6.500l3.500 4 3.500-4" fill="none" stroke="#c9c7ba" stroke-width="2"/></svg>
<div style="left:1041px;top:967px;width:234px;height:1px;background:#b4b09c;"></div>
<svg style="left:1074px;top:970px;" width="20" height="11" viewBox="0 0 20 11"><rect x="1.500" y="2.500" width="8" height="6" rx="3" fill="none" stroke="#555" stroke-width="1.600"/><rect x="8.500" y="2.500" width="8" height="6" rx="3" fill="none" stroke="#555" stroke-width="1.600"/></svg>
<span class="t" style="left:1104.00px;top:969.16px;font-size:13px;color:#666;font-family:'Liberation Serif',serif;font-weight:bold;font-style:italic;">fx</span>
<svg style="left:1131px;top:968px;" width="15" height="14" viewBox="0 0 15 14"><rect x="1.500" y="1.500" width="12" height="11" fill="#ddd" stroke="#444"/><circle cx="7.500" cy="7" r="3.200" fill="#fff" stroke="#444"/></svg>
<svg style="left:1158px;top:968px;" width="15" height="14" viewBox="0 0 15 14"><circle cx="7" cy="7" r="5.500" fill="#fff" stroke="#555" stroke-width="1.200"/><path d="M3 11A5.500 5.500 0 0111 3z" fill="#777"/></svg>
<svg style="left:1186px;top:969px;" width="14" height="12" viewBox="0 0 14 12"><path d="M1.500 2.500h4l1 1.500h6v7h-11z" fill="#e8e8e8" stroke="#888"/></svg>
<svg style="left:1213px;top:969px;" width="13" height="13" viewBox="0 0 13 13"><path d="M2.500 2.500h8v8h-8z" fill="#f4f4f4" stroke="#888"/><path d="M5.500 5.500h6v6h-6z" fill="#fff" stroke="#777"/></svg>
<svg style="left:1240px;top:968px;" width="13" height="14" viewBox="0 0 13 14"><path d="M3 4.500h7l-1 8.500h-5z" fill="#eee" stroke="#666"/><path d="M2 3.500h9" stroke="#444" stroke-width="1.600"/><path d="M5 6v5M8 6v5" stroke="#777"/></svg>
<svg style="left:1264px;top:974px;" width="12" height="12" viewBox="0 0 12 12"><path d="M9 3h2M6 6h2M9 6h2M3 9h2M6 9h2M9 9h2" stroke="#a8a8a8" stroke-width="2"/></svg>
<!-- part_dialog -->
<div style="left:157px;top:604px;width:791px;height:400px;background:#0046d5;border-radius:7px 7px 0 0;box-shadow:inset 1px 0 0 #0030b8,inset -1px 0 0 #001ea0;"></div>
<div style="left:157px;top:604px;width:791px;height:29px;background:linear-gradient(180deg,#3a88f8 0%,#3d8bf5 5%,#1c6ff0 10%,#0558e8 18%,#0453e4 45%,#0560f0 80%,#0663f4 90%,#0553e0 96%,#0340c8 100%);border-radius:7px 7px 0 0;"></div>
<div style="left:160px;top:633px;width:785px;height:370px;background:#ececec;"></div>
<span class="t" style="left:164.00px;top:612.73px;font-size:14.5px;color:#fff;font-weight:bold;text-shadow:1px 1px 0 #0a2a90;transform:scaleX(0.8449);transform-origin:0 0;">Стиль слоя</span>
<div style="left:922px;top:609px;width:21px;height:21px;border-radius:3px;background:radial-gradient(circle at 30% 30%,#f0a088 0%,#e0603c 35%,#c8401c 75%,#b03010 100%);box-shadow:inset 0 0 0 1px #fff;"></div><svg style="left:922px;top:609px;" width="21" height="21" viewBox="0 0 21 21"><path d="M5.7 5.7L15.3 15.3M15.3 5.7L5.7 15.3" stroke="#fff" stroke-width="2.2" stroke-linecap="butt"/></svg>
<div style="left:171px;top:646px;width:215px;height:360px;background:#ececec;border:1px solid #111;box-sizing:border-box;box-shadow:inset 1px 1px 0 #666;"></div>
<span class="t" style="left:176.00px;top:651.19px;font-size:11px;color:#000;letter-spacing:-0.238px;">Стили</span>
<div style="left:172px;top:668px;width:213px;height:1px;background:#111;"></div>
<div style="left:172px;top:669px;width:213px;height:1px;background:#888;"></div>
<div style="left:172px;top:670px;width:213px;height:1px;background:#fff;"></div>
<div style="left:172px;top:671px;width:213px;height:1px;background:#111;"></div>
<span class="t" style="left:176.00px;top:676.19px;font-size:11px;color:#000;letter-spacing:-0.411px;">Параметры наложения: По умолчанию</span>
<div style="left:172px;top:693px;width:213px;height:1px;background:#111;"></div>
<div style="left:177px;top:698px;width:11px;height:11px;background:linear-gradient(135deg,#dcdcd4,#fff);border:1px solid #1c5180;box-sizing:border-box;"></div>
<span class="t" style="left:191.00px;top:698.19px;font-size:11px;color:#000;letter-spacing:-0.756px;">Тень</span>
<div style="left:172px;top:715px;width:213px;height:1px;background:#fafafa;"></div>
<div style="left:177px;top:720px;width:11px;height:11px;background:linear-gradient(135deg,#dcdcd4,#fff);border:1px solid #1c5180;box-sizing:border-box;"></div>
<span class="t" style="left:191.00px;top:720.19px;font-size:11px;color:#000;letter-spacing:-0.343px;">Внутренняя тень</span>
<div style="left:172px;top:737px;width:213px;height:1px;background:#fafafa;"></div>
<div style="left:177px;top:742px;width:11px;height:11px;background:linear-gradient(135deg,#dcdcd4,#fff);border:1px solid #1c5180;box-sizing:border-box;"></div>
<span class="t" style="left:191.00px;top:742.19px;font-size:11px;color:#000;letter-spacing:-0.680px;">Внешнее свечение</span>
<div style="left:172px;top:759px;width:213px;height:1px;background:#fafafa;"></div>
<div style="left:177px;top:764px;width:11px;height:11px;background:linear-gradient(135deg,#dcdcd4,#fff);border:1px solid #1c5180;box-sizing:border-box;"></div>
<span class="t" style="left:191.00px;top:764.19px;font-size:11px;color:#000;letter-spacing:-0.462px;">Внутреннее свечение</span>
<div style="left:172px;top:781px;width:213px;height:1px;background:#fafafa;"></div>
<div style="left:177px;top:786px;width:11px;height:11px;background:linear-gradient(135deg,#dcdcd4,#fff);border:1px solid #1c5180;box-sizing:border-box;"></div>
<span class="t" style="left:191.00px;top:786.19px;font-size:11px;color:#000;letter-spacing:-0.426px;">Тиснение</span>
<div style="left:172px;top:803px;width:213px;height:1px;background:#fafafa;"></div>
<div style="left:190px;top:808px;width:11px;height:11px;background:linear-gradient(135deg,#dcdcd4,#fff);border:1px solid #1c5180;box-sizing:border-box;"></div>
<span class="t" style="left:204.00px;top:808.19px;font-size:11px;color:#000;letter-spacing:-0.209px;">Контур</span>
<div style="left:172px;top:825px;width:213px;height:1px;background:#fafafa;"></div>
<div style="left:190px;top:830px;width:11px;height:11px;background:linear-gradient(135deg,#dcdcd4,#fff);border:1px solid #1c5180;box-sizing:border-box;"></div>
<span class="t" style="left:204.00px;top:830.19px;font-size:11px;color:#000;letter-spacing:-0.053px;">Текстура</span>
<div style="left:172px;top:847px;width:213px;height:1px;background:#fafafa;"></div>
<div style="left:177px;top:852px;width:11px;height:11px;background:linear-gradient(135deg,#dcdcd4,#fff);border:1px solid #1c5180;box-sizing:border-box;"></div>
<span class="t" style="left:191.00px;top:852.19px;font-size:11px;color:#000;letter-spacing:-0.534px;">Глянец</span>
<div style="left:172px;top:869px;width:213px;height:1px;background:#fafafa;"></div>
<div style="left:177px;top:874px;width:11px;height:11px;background:linear-gradient(135deg,#dcdcd4,#fff);border:1px solid #1c5180;box-sizing:border-box;"></div>
<span class="t" style="left:191.00px;top:874.19px;font-size:11px;color:#000;letter-spacing:-0.485px;">Наложение цвета</span>
<div style="left:172px;top:891px;width:213px;height:1px;background:#fafafa;"></div>
<div style="left:177px;top:896px;width:11px;height:11px;background:linear-gradient(135deg,#dcdcd4,#fff);border:1px solid #1c5180;box-sizing:border-box;"></div>
<span class="t" style="left:191.00px;top:896.19px;font-size:11px;color:#000;letter-spacing:-0.447px;">Наложение градиента</span>
<div style="left:172px;top:913px;width:213px;height:1px;background:#fafafa;"></div>
<div style="left:177px;top:918px;width:11px;height:11px;background:linear-gradient(135deg,#dcdcd4,#fff);border:1px solid #1c5180;box-sizing:border-box;"></div>
<span class="t" style="left:191.00px;top:918.19px;font-size:11px;color:#000;letter-spacing:-0.326px;">Перекрытие узора</span>
<div style="left:172px;top:935px;width:213px;height:1px;background:#fafafa;"></div>
<div style="left:172px;top:936px;width:213px;height:21px;background:#316ac5;"></div>
<div style="left:177px;top:940px;width:11px;height:11px;background:#fff;border:1px solid #1c5180;box-sizing:border-box;"></div>
<svg style="left:177px;top:940px;" width="11" height="11" viewBox="0 0 11 11"><path d="M2.500 5.500l2 2 4-4.500" fill="none" stroke="#21a121" stroke-width="2"/></svg>
<span class="t" style="left:191.00px;top:940.19px;font-size:11px;color:#fff;font-weight:bold;letter-spacing:-0.449px;">Обводка</span>
<div style="left:402px;top:651px;width:399px;height:359px;border:1px solid #c2bfa8;box-sizing:border-box;box-shadow:inset 1px 1px 0 #fff, 1px 1px 0 #fff;"></div>
<div style="left:415px;top:645px;width:54px;height:12px;background:#ececec;"></div>
<span class="t" style="left:420.00px;top:646.69px;font-size:11px;color:#0033cc;font-weight:bold;letter-spacing:-0.378px;">Обводка</span>
<div style="left:413px;top:665px;width:377px;height:105px;border:1px solid #c2bfa8;box-sizing:border-box;box-shadow:inset 1px 1px 0 #fff, 1px 1px 0 #fff;"></div>
<div style="left:425px;top:659px;width:62px;height:12px;background:#ececec;"></div>
<span class="t" style="left:429.50px;top:660.69px;font-size:11px;color:#0033cc;font-weight:bold;letter-spacing:-0.333px;">Структура</span>
<span class="t" style="left:467.38px;top:676.69px;font-size:11px;color:#000;letter-spacing:-0.623px;">Размер:</span>
<div style="left:513px;top:682px;width:98px;height:1px;background:#bcbcb4;border-bottom:1px solid #fff;"></div>
<svg style="left:511px;top:677px;" width="11" height="13" viewBox="0 0 11 13"><path d="M1.500 5L5.500 1l4 4v6.500h-8z" fill="#f0f6f0" stroke="#58b058" stroke-width="1"/><path d="M2 10.500h7" stroke="#30a030" stroke-width="1.500"/></svg>
<div style="left:621px;top:675px;width:38px;height:16px;background:#fff;border:1px solid #7f9db9;box-sizing:border-box;"></div>
<span class="t" style="left:627.00px;top:678.11px;font-size:10.5px;color:#000;">3</span>
<span class="t" style="left:661.00px;top:676.69px;font-size:11px;color:#000;letter-spacing:0.081px;">пикс.</span>
<span class="t" style="left:446.18px;top:697.69px;font-size:11px;color:#000;letter-spacing:-0.319px;">Положение:</span>
<div style="left:510px;top:696px;width:90px;height:23px;background:#fff;border:1px solid #7f9db9;box-sizing:border-box;"></div>
<span class="t" style="left:514.00px;top:702.19px;font-size:11px;color:#000;letter-spacing:0.131px;">Внутри</span>
<div style="left:582px;top:698px;width:16px;height:19px;background:linear-gradient(180deg,#d6e2fc 0%,#b4c8f6 60%,#a0b8f0 100%);border:1px solid #b4c8f4;border-radius:2px;box-sizing:border-box;"></div>
<svg style="left:582px;top:698px;" width="16" height="19" viewBox="0 0 16 19"><path d="M4.0 7.0l4 4 4-4" fill="none" stroke="#4d6185" stroke-width="2"/></svg>
<span class="t" style="left:470.00px;top:723.69px;font-size:11px;color:#000;letter-spacing:-0.495px;">Режим:</span>
<div style="left:560px;top:721px;width:102px;height:24px;background:#fff;border:1px solid #7f9db9;box-sizing:border-box;"></div>
<div style="left:644px;top:723px;width:16px;height:20px;background:linear-gradient(180deg,#d6e2fc 0%,#b4c8f6 60%,#a0b8f0 100%);border:1px solid #b4c8f4;border-radius:2px;box-sizing:border-box;"></div>
<svg style="left:644px;top:723px;" width="16" height="20" viewBox="0 0 16 20"><path d="M4.0 7.5l4 4 4-4" fill="none" stroke="#4d6185" stroke-width="2"/></svg>
<span class="t" style="left:422.00px;top:747.69px;font-size:11px;color:#000;letter-spacing:-0.261px;">Непрозрачность:</span>
<div style="left:600px;top:753px;width:10px;height:1px;background:#bcbcb4;border-bottom:1px solid #fff;"></div>
<svg style="left:607px;top:748px;" width="11" height="13" viewBox="0 0 11 13"><path d="M1.500 5L5.500 1l4 4v6.500h-8z" fill="#f0f6f0" stroke="#58b058" stroke-width="1"/><path d="M2 10.500h7" stroke="#30a030" stroke-width="1.500"/></svg>
<div style="left:621px;top:747px;width:38px;height:16px;background:#fff;border:1px solid #7f9db9;box-sizing:border-box;"></div>
<span class="t" style="left:627.00px;top:750.11px;font-size:10.5px;color:#000;letter-spacing:-0.172px;">100</span>
<span class="t" style="left:661.00px;top:747.69px;font-size:11px;color:#000;">%</span>
<div style="left:510px;top:719px;width:90px;height:50px;background:#fff;border:1px solid #000;box-sizing:border-box;"></div>
<span class="t" style="left:513.00px;top:721.69px;font-size:11px;color:#333;letter-spacing:-0.179px;">Снаружи</span>
<div style="left:511px;top:737px;width:88px;height:15px;background:#316ac5;"></div>
<span class="t" style="left:511.50px;top:739.19px;font-size:11px;color:#fff;letter-spacing:0.131px;">Внутри</span>
<span class="t" style="left:513.00px;top:754.69px;font-size:11px;color:#000;letter-spacing:-0.331px;">По центру</span>
<div style="left:413px;top:785px;width:377px;height:130px;border:1px solid #c2bfa8;box-sizing:border-box;box-shadow:inset 1px 1px 0 #fff, 1px 1px 0 #fff;"></div>
<div style="left:425px;top:779px;width:160px;height:14px;background:#ececec;"></div>
<span class="t" style="left:427.00px;top:779.69px;font-size:11px;color:#000;letter-spacing:0.013px;">Тип обводки:</span>
<div style="left:498px;top:777px;width:84px;height:24px;background:#fff;border:1px solid #7f9db9;box-sizing:border-box;"></div>
<span class="t" style="left:502.00px;top:783.69px;font-size:11px;color:#000;letter-spacing:-0.537px;">Цвет</span>
<div style="left:564px;top:779px;width:16px;height:20px;background:linear-gradient(180deg,#d6e2fc 0%,#b4c8f6 60%,#a0b8f0 100%);border:1px solid #b4c8f4;border-radius:2px;box-sizing:border-box;"></div>
<svg style="left:564px;top:779px;" width="16" height="20" viewBox="0 0 16 20"><path d="M4.0 7.5l4 4 4-4" fill="none" stroke="#4d6185" stroke-width="2"/></svg>
<span class="t" style="left:422.00px;top:811.19px;font-size:11px;color:#000;letter-spacing:-0.141px;">Цвет:</span>
<div style="left:453px;top:810px;width:31px;height:16px;background:#ff0000;border:1px solid #8a8a8a;box-sizing:border-box;"></div>
<div style="left:819px;top:646px;width:115px;height:18px;background:linear-gradient(180deg,#fff 0%,#f4f3ee 60%,#dcd8cc 100%);border:1px solid #003c74;border-radius:3px;box-sizing:border-box;"></div>
<span class="t" style="left:868.75px;top:648.92px;font-size:12.5px;color:#000;letter-spacing:0.041px;">Да</span>
<div style="left:820px;top:647px;width:113px;height:16px;border:2px solid #a8c0f0;border-radius:2px;box-sizing:border-box;"></div>
<div style="left:819px;top:674px;width:115px;height:18px;background:linear-gradient(180deg,#fff 0%,#f4f3ee 60%,#dcd8cc 100%);border:1px solid #003c74;border-radius:3px;box-sizing:border-box;"></div>
<span class="t" style="left:854.75px;top:676.92px;font-size:12.5px;color:#000;letter-spacing:-0.225px;">Отмена</span>
<div style="left:819px;top:702px;width:115px;height:18px;background:linear-gradient(180deg,#fff 0%,#f4f3ee 60%,#dcd8cc 100%);border:1px solid #003c74;border-radius:3px;box-sizing:border-box;"></div>
<span class="t" style="left:834.75px;top:704.92px;font-size:12.5px;color:#000;letter-spacing:-0.125px;">Новый стиль...</span>
<div style="left:839px;top:729px;width:13px;height:13px;background:linear-gradient(135deg,#dcdcd4,#fff);border:1px solid #1c5180;box-sizing:border-box;"></div>
<svg style="left:839px;top:729px;" width="13" height="13" viewBox="0 0 13 13"><path d="M3 6.500l2.500 2.500 4.500-5" fill="none" stroke="#21a121" stroke-width="2"/></svg>
<span class="t" style="left:854.50px;top:729.42px;font-size:12.5px;color:#000;letter-spacing:-0.136px;">Просмотр</span>
<div style="left:843px;top:749px;width:66px;height:66px;background:#dcdcdc;border:1px solid #f8f8f8;box-sizing:border-box;box-shadow:-1px -1px 0 #c0c0c0;"></div>
<div style="left:860px;top:767px;width:31px;height:31px;background:#5c5c5c;border:2px solid #ff0000;box-sizing:border-box;"></div>
<!-- part_anno -->
<svg style="left:0px;top:0px;pointer-events:none;" width="1280" height="994" viewBox="0 0 1280 994"><defs><filter id="rb" x="-5%" y="-5%" width="110%" height="110%"><feGaussianBlur stdDeviation="1.1"/></filter></defs><g filter="url(#rb)" fill="none" stroke="#ff0000" stroke-linecap="round" stroke-linejoin="round"><path d="M394 805C415 796 440 788 462 776" stroke-width="10"/><path d="M440 787C460 779 478 770 492 760" stroke-width="8"/><path d="M449 759.500C465 760.500 480 759.500 494 757" stroke-width="6"/><path d="M490 783C490 775 491 767 493.500 759" stroke-width="6.500"/><path d="M496 752C493 738 507 731.5 529 731C552 730.5 573 733 576.5 743C579 752 565 756 545 757C525 758 504 757.5 498 751" stroke-width="8.5"/><path d="M786 870.500H950" stroke-width="5.500" stroke-linecap="butt"/><path d="M1030 845C1060 841 1150 844 1228 850C1250 852 1257 858 1256 868C1255 880 1248 885 1228 885.5C1180 886.5 1090 886 1045 884C1026 882 1018 876 1019 864C1020 852 1026 846 1038 844" stroke-width="10"/></g><path d="M934 852C950 861 985 868 1004 870.500C985 874 952 881 934 889.500C946 880 953 872 953 870.500C953 869 946 862 934 852Z" fill="#ff0000" stroke="#ff0000" stroke-width="1.500" stroke-linejoin="round" filter="url(#rb)"/></svg>
</div>
</body></html>
